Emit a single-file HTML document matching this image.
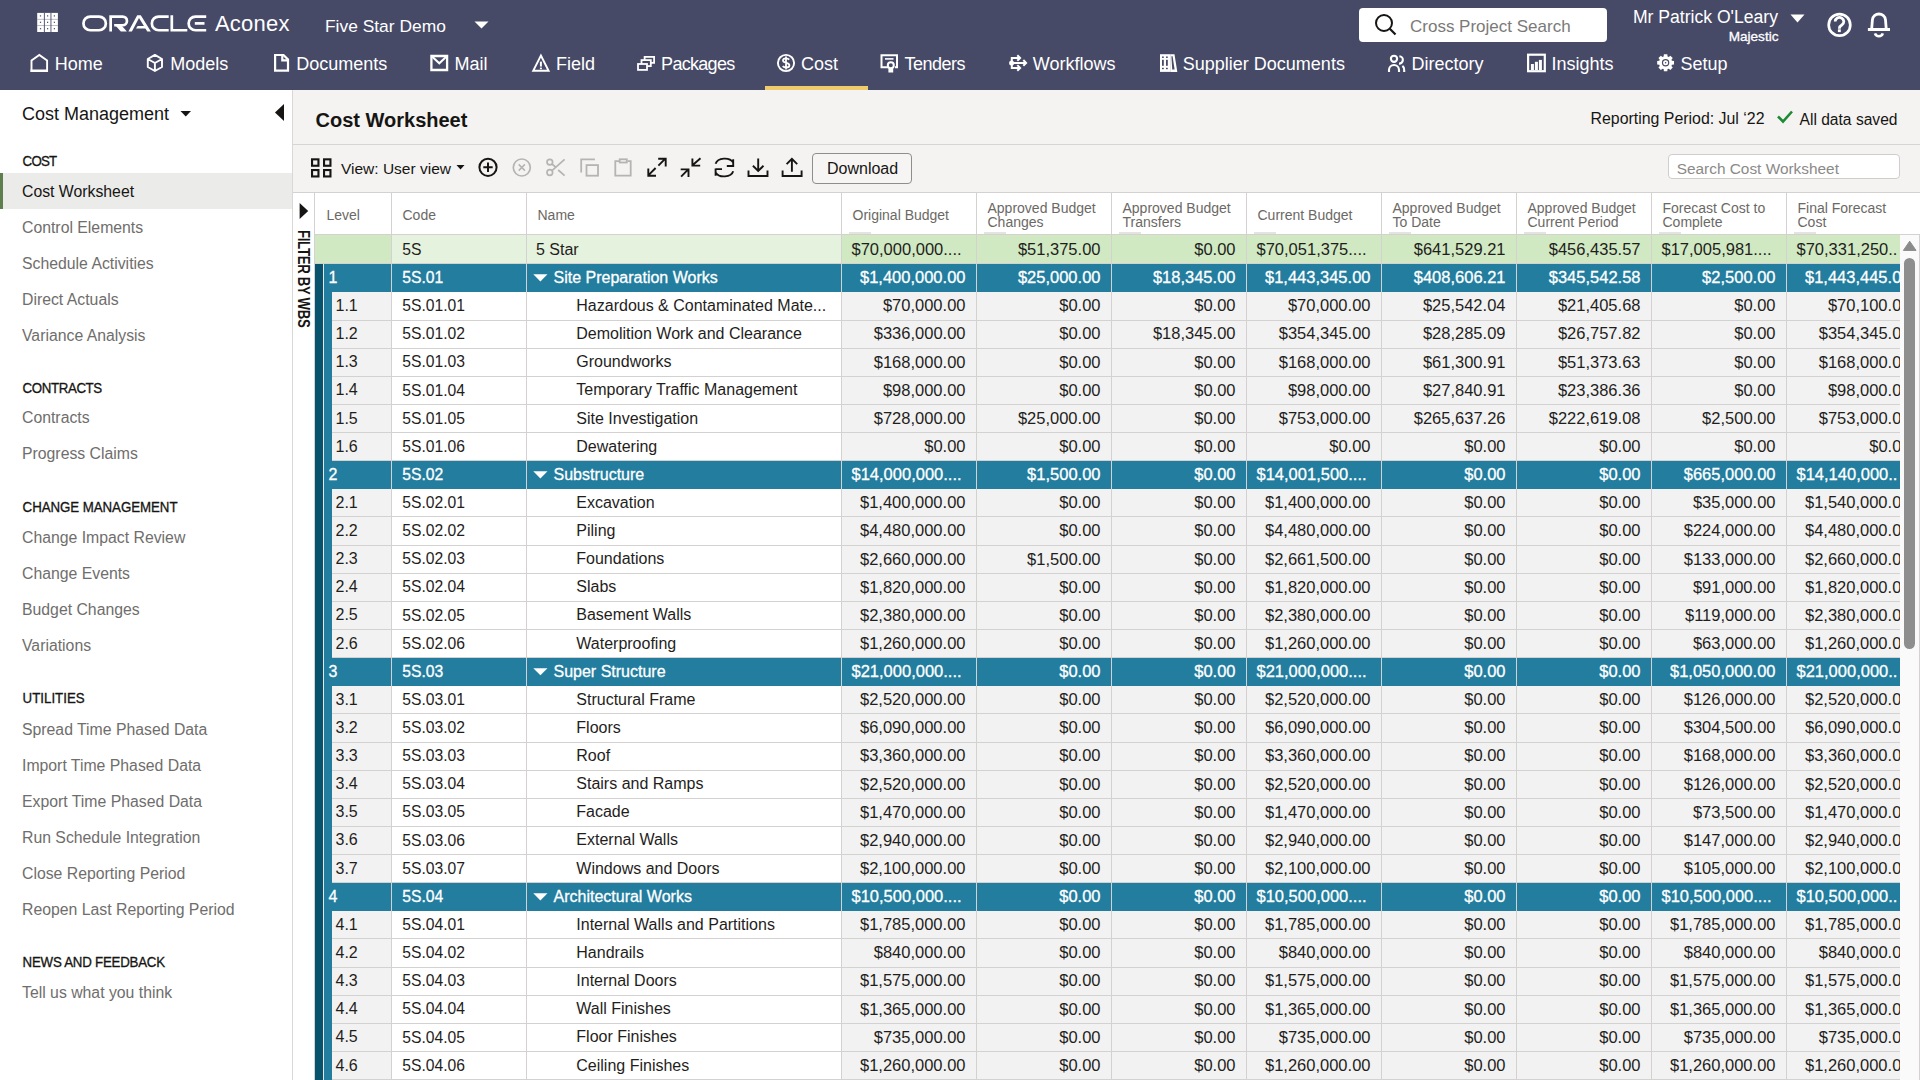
<!DOCTYPE html><html><head><meta charset="utf-8"><title>Cost Worksheet</title><style>
*{box-sizing:border-box;margin:0;padding:0}
html,body{width:1920px;height:1080px;overflow:hidden;background:#f4f3f1;font-family:"Liberation Sans", sans-serif}
.t{position:absolute;white-space:nowrap}
.abs{position:absolute}
svg{position:absolute;overflow:visible}
</style></head><body>
<div class="abs" style="left:0;top:0;width:1920px;height:90px;background:#474a67"></div>
<svg style="left:0;top:0" width="80" height="40"><rect x="37.2" y="12.9" width="20.7" height="19.1" fill="#fff"/><rect x="43.9" y="12.9" width="0.9" height="19.1" fill="#474a67"/><rect x="50.5" y="12.9" width="0.9" height="19.1" fill="#474a67"/><rect x="37.2" y="18.9" width="20.7" height="0.8" fill="#474a67" opacity="0.45"/><rect x="37.2" y="25.1" width="20.7" height="0.8" fill="#474a67" opacity="0.45"/><rect x="39.9" y="15.3" width="1.2" height="1.2" fill="#474a67"/><rect x="47.0" y="15.3" width="1.2" height="1.2" fill="#474a67"/><rect x="53.8" y="15.3" width="1.2" height="1.2" fill="#474a67"/><rect x="39.9" y="21.7" width="1.2" height="1.2" fill="#474a67"/><rect x="47.0" y="21.7" width="1.2" height="1.2" fill="#474a67"/><rect x="53.8" y="21.7" width="1.2" height="1.2" fill="#474a67"/><rect x="39.9" y="28.099999999999998" width="1.2" height="1.2" fill="#474a67"/><rect x="47.0" y="28.099999999999998" width="1.2" height="1.2" fill="#474a67"/><rect x="53.8" y="28.099999999999998" width="1.2" height="1.2" fill="#474a67"/></svg>
<svg style="left:0;top:0" width="300" height="40" fill="none" stroke="#fff" stroke-width="2.7">
<rect x="83.45" y="16.55" width="22.4" height="13.7" rx="6.85"/>
<path d="M110.65 31.6 V16.55 H122.6 a4.35 4.35 0 0 1 0 8.7 H114.2"/>
<path d="M114.3 24.2 L120.8 31.6 H126.9 L120.4 24.2 Z" fill="#fff" stroke="none"/>
<path d="M128.4 31.6 L137.2 15.2 H140.8 L150.9 31.6 H147.3 L139 17.9 L131.9 31.6 Z" fill="#fff" stroke="none"/>
<path d="M136 28.6 L137.6 25.9 H145.7 L147.3 28.6 Z" fill="#fff" stroke="none"/>
<path d="M168.7 16.55 H158.7 a6.85 6.85 0 0 0 0 13.7 H168.7"/>
<path d="M171.8 15.2 V30.25 H187.3"/>
<path d="M206.2 16.55 H195.5 a6.85 6.85 0 0 0 0 13.7 H206.2"/>
<path d="M194.8 23.4 H204.5"/>
</svg>
<div class="t" style="left:215px;top:10.08px;font-size:22px;line-height:28px;color:#fff;font-weight:400;letter-spacing:0.2px">Aconex</div>
<div class="t" style="left:325px;top:14.97px;font-size:17.4px;line-height:22px;color:#fff;font-weight:400;">Five Star Demo</div>
<svg style="left:0;top:0" width="500" height="40"><path d="M474.5 21.5 H488.5 L481.5 28.5Z" fill="#fff"/></svg>
<div class="abs" style="left:1359px;top:8px;width:248px;height:34px;background:#fff;border-radius:4px"></div>
<svg style="left:0;top:0" width="1920" height="50"><circle cx="1384" cy="23" r="8" fill="none" stroke="#161513" stroke-width="2"/><path d="M1389.8 28.8 L1395.5 34.5" stroke="#161513" stroke-width="2.2"/></svg>
<div class="t" style="left:1410px;top:15.91px;font-size:17px;line-height:21px;color:#7b7a78;font-weight:400;">Cross Project Search</div>
<div class="t" style="right:142px;top:5.90px;font-size:17.6px;line-height:22px;color:#fff;font-weight:400;">Mr Patrick O'Leary</div>
<div class="t" style="right:141.5px;top:28.29px;font-size:13.6px;line-height:17px;color:#fff;font-weight:400;-webkit-text-stroke:0.3px #fff">Majestic</div>
<svg style="left:0;top:0" width="1920" height="50"><path d="M1790.5 14.5 H1804.5 L1797.5 22.5Z" fill="#fff"/><circle cx="1839.5" cy="24.9" r="10.8" fill="none" stroke="#fff" stroke-width="2.7"/><path d="M1835.2 21.6 a4.3 4.1 0 1 1 6.6 3.4 c-1.3 0.8 -2.4 1.5 -2.4 3.2 v0.6" fill="none" stroke="#fff" stroke-width="2.8"/><rect x="1837.9" y="29.3" width="2.9" height="2.8" fill="#fff"/><path d="M1871.7 28.5 L1872.4 19.8 A6.6 6.6 0 0 1 1885.5 19.8 L1886.2 28.5" fill="none" stroke="#fff" stroke-width="2.8"/><rect x="1867.9" y="28" width="22.1" height="3" fill="#fff"/><path d="M1875 33.4 A4.1 4.1 0 0 0 1882.8 33.4" fill="none" stroke="#fff" stroke-width="2.6"/></svg>
<div class="t" style="left:54.8px;top:53.26px;font-size:18px;line-height:22px;color:#fff;font-weight:400;letter-spacing:0px">Home</div>
<div class="t" style="left:170.3px;top:53.26px;font-size:18px;line-height:22px;color:#fff;font-weight:400;letter-spacing:0px">Models</div>
<div class="t" style="left:296.3px;top:53.26px;font-size:18px;line-height:22px;color:#fff;font-weight:400;letter-spacing:0px">Documents</div>
<div class="t" style="left:454.5px;top:53.26px;font-size:18px;line-height:22px;color:#fff;font-weight:400;letter-spacing:0px">Mail</div>
<div class="t" style="left:556.0999999999999px;top:53.26px;font-size:18px;line-height:22px;color:#fff;font-weight:400;letter-spacing:0px">Field</div>
<div class="t" style="left:661.0999999999999px;top:53.26px;font-size:18px;line-height:22px;color:#fff;font-weight:400;letter-spacing:-0.7px">Packages</div>
<div class="t" style="left:801.0999999999999px;top:53.26px;font-size:18px;line-height:22px;color:#fff;font-weight:400;letter-spacing:0px">Cost</div>
<div class="t" style="left:904.5px;top:53.26px;font-size:18px;line-height:22px;color:#fff;font-weight:400;letter-spacing:-0.5px">Tenders</div>
<div class="t" style="left:1032.8px;top:53.26px;font-size:18px;line-height:22px;color:#fff;font-weight:400;letter-spacing:0px">Workflows</div>
<div class="t" style="left:1182.8px;top:53.26px;font-size:18px;line-height:22px;color:#fff;font-weight:400;letter-spacing:0px">Supplier Documents</div>
<div class="t" style="left:1411.5px;top:53.26px;font-size:18px;line-height:22px;color:#fff;font-weight:400;letter-spacing:0px">Directory</div>
<div class="t" style="left:1551.5px;top:53.26px;font-size:18px;line-height:22px;color:#fff;font-weight:400;letter-spacing:0px">Insights</div>
<div class="t" style="left:1680.5px;top:53.26px;font-size:18px;line-height:22px;color:#fff;font-weight:400;letter-spacing:0px">Setup</div>
<svg style="left:0;top:0" width="1920" height="90">
<path d="M31.5 71 V60.6 L39.3 54.9 L47.1 60.6 V71 Z" fill="none" stroke="#fff" stroke-width="1.9" stroke-linejoin="miter"/><rect x="30.5" y="69.5" width="17.5" height="2.4" fill="#fff"/>
<path d="M154.9 54.9 L162 59 V67 L154.9 71 L147.8 67 V59 Z M147.8 59 L154.9 63 L162 59 M154.9 63 V71" fill="none" stroke="#fff" stroke-width="1.9" stroke-linejoin="round"/>
<path d="M275.1 55 H283.5 L288 59.5 V70.7 H275.1 Z" fill="none" stroke="#fff" stroke-width="2.2" stroke-linejoin="miter"/><path d="M282.3 55 V60.3 H288" fill="none" stroke="#fff" stroke-width="2.2"/>
<path d="M431.4 56 H447.1 V70 H431.4 Z" fill="none" stroke="#fff" stroke-width="2.3"/><path d="M432 56.5 L439.3 63.3 L446.5 56.5" fill="none" stroke="#fff" stroke-width="2"/>
<path d="M540.9 55.5 L548.6 70.7 H533.2 Z" fill="none" stroke="#fff" stroke-width="1.9" stroke-linejoin="miter"/><path d="M540.9 61.6 V66.6" stroke="#fff" stroke-width="2"/><rect x="539.9" y="67.6" width="2" height="1.6" fill="#fff"/>
<g fill="#474a67" stroke="#fff" stroke-width="1.8"><rect x="644.65" y="56.9" width="9.45" height="5.95"/><rect x="641.5" y="60.1" width="9.3" height="6"/><rect x="638" y="64" width="9" height="5.9"/></g>
<circle cx="786" cy="63" r="8.1" fill="none" stroke="#fff" stroke-width="1.9"/><path d="M789.2 59.6 c-0.8 -1 -1.9 -1.3 -3.1 -1.3 c-1.9 0 -3.1 0.9 -3.1 2.2 c0 3 6.4 1.6 6.4 4.7 c0 1.4 -1.3 2.3 -3.3 2.3 c-1.3 0 -2.6 -0.5 -3.4 -1.4 M786 56.5 V69.5" fill="none" stroke="#fff" stroke-width="1.8"/>
<path d="M891.5 67.2 H881.5 V55.3 H897 V67.2 H895" fill="none" stroke="#fff" stroke-width="2"/><path d="M885 58.9 H893.5" stroke="#fff" stroke-width="1.6"/><circle cx="890.8" cy="65.2" r="3" fill="#474a67" stroke="#fff" stroke-width="2"/><path d="M889 68.2 V72 H892.6 V68.2" fill="#fff" stroke="#fff" stroke-width="1.2"/>
<circle cx="1011.6" cy="62.9" r="1.6" fill="none" stroke="#fff" stroke-width="1.8"/><path d="M1011.8 57 V69 M1010.9 58 H1019.6 M1010.9 67.9 H1019.6 M1013.3 62.9 H1025.6 M1017.3 55.2 L1020.1 58 L1017.3 60.8 M1023.3 60 L1026.1 62.9 L1023.3 65.8 M1017.3 65.1 L1020.1 67.9 L1017.3 70.7" fill="none" stroke="#fff" stroke-width="2"/>
<path d="M1160 54.2 H1170.5 V71.9 H1160 Z" fill="#fff"/><g fill="#474a67"><rect x="1162" y="56.5" width="1.8" height="1.4"/><rect x="1166" y="56.5" width="1.8" height="1.4"/><rect x="1162" y="59.8" width="1.8" height="6"/><rect x="1166" y="59.8" width="1.8" height="6"/><rect x="1162" y="67.8" width="1.8" height="1.4"/><rect x="1166" y="67.8" width="1.8" height="1.4"/></g>
<path d="M1170.3 54.2 H1174.5 L1177.3 71.9 H1170.3 Z" fill="#fff"/><path d="M1171.4 56.3 H1172.6 L1174.6 69.5 H1172.2 Z" fill="#474a67"/>
<circle cx="1394" cy="58.8" r="3.1" fill="none" stroke="#fff" stroke-width="2.1"/><path d="M1399.4 56.3 A3.3 3.3 0 0 1 1399 63.6" fill="none" stroke="#fff" stroke-width="2.1"/><path d="M1389 72 V70 A5 5 0 0 1 1399 70 V72" fill="none" stroke="#fff" stroke-width="2.1"/><path d="M1402.4 65.8 A4.5 4.5 0 0 1 1404.2 70 V72" fill="none" stroke="#fff" stroke-width="2.1"/>
<rect x="1528.1" y="54.7" width="16.7" height="16.5" fill="none" stroke="#fff" stroke-width="2.2"/><g fill="#fff"><rect x="1530.9" y="64" width="3" height="6"/><rect x="1534.9" y="61.8" width="3" height="8.2"/><rect x="1538.9" y="59.9" width="3" height="10.1"/></g>
<path d="M1667.31 71.23 L1663.89 71.23 L1663.65 69.11 L1662.52 68.64 L1660.85 69.97 L1658.43 67.55 L1659.76 65.88 L1659.29 64.75 L1657.17 64.51 L1657.17 61.09 L1659.29 60.85 L1659.76 59.72 L1658.43 58.05 L1660.85 55.63 L1662.52 56.96 L1663.65 56.49 L1663.89 54.37 L1667.31 54.37 L1667.55 56.49 L1668.68 56.96 L1670.35 55.63 L1672.77 58.05 L1671.44 59.72 L1671.91 60.85 L1674.03 61.09 L1674.03 64.51 L1671.91 64.75 L1671.44 65.88 L1672.77 67.55 L1670.35 69.97 L1668.68 68.64 L1667.55 69.11 Z" fill="#fff"/><circle cx="1665.6" cy="62.8" r="3.7" fill="#474a67"/><circle cx="1665.6" cy="62.8" r="2.5" fill="#fff"/><circle cx="1665.6" cy="62.8" r="0.8" fill="#474a67"/></svg>
<div class="abs" style="left:765px;top:86px;width:103px;height:4px;background:#f0cb6b"></div>
<div class="abs" style="left:0;top:90px;width:293px;height:990px;background:#fff;border-right:1px solid #d9d8d6"></div>
<div class="t" style="left:22px;top:102.76px;font-size:18px;line-height:22px;color:#161513;font-weight:400;">Cost Management</div>
<svg style="left:0;top:0" width="300" height="140"><path d="M180.5 111 H191 L185.75 116.5Z" fill="#161513"/><path d="M284 104 V121 L275 112.5Z" fill="#161513"/></svg>
<div class="abs" style="left:0;top:173px;width:292px;height:36px;background:#ebebea"></div>
<div class="abs" style="left:0;top:173px;width:3px;height:36px;background:#5e7f4d"></div>
<div class="t" style="left:22.6px;top:152.69px;font-size:13.3px;line-height:17px;color:#161513;font-weight:400;letter-spacing:-0.8px;-webkit-text-stroke:0.3px #161513;transform:scaleY(1.06);transform-origin:0 75%">COST</div>
<div class="t" style="left:22px;top:181.53px;font-size:15.8px;line-height:20px;color:#161513;font-weight:400;">Cost Worksheet</div>
<div class="t" style="left:22px;top:217.53px;font-size:15.8px;line-height:20px;color:#6f6e6c;font-weight:400;">Control Elements</div>
<div class="t" style="left:22px;top:253.53px;font-size:15.8px;line-height:20px;color:#6f6e6c;font-weight:400;">Schedule Activities</div>
<div class="t" style="left:22px;top:289.53px;font-size:15.8px;line-height:20px;color:#6f6e6c;font-weight:400;">Direct Actuals</div>
<div class="t" style="left:22px;top:325.53px;font-size:15.8px;line-height:20px;color:#6f6e6c;font-weight:400;">Variance Analysis</div>
<div class="t" style="left:22.6px;top:380.09px;font-size:13.3px;line-height:17px;color:#161513;font-weight:400;letter-spacing:-0.39px;-webkit-text-stroke:0.3px #161513;transform:scaleY(1.06);transform-origin:0 75%">CONTRACTS</div>
<div class="t" style="left:22px;top:408.03px;font-size:15.8px;line-height:20px;color:#6f6e6c;font-weight:400;">Contracts</div>
<div class="t" style="left:22px;top:444.33px;font-size:15.8px;line-height:20px;color:#6f6e6c;font-weight:400;">Progress Claims</div>
<div class="t" style="left:22.6px;top:499.09px;font-size:13.3px;line-height:17px;color:#161513;font-weight:400;letter-spacing:-0.06px;-webkit-text-stroke:0.3px #161513;transform:scaleY(1.06);transform-origin:0 75%">CHANGE MANAGEMENT</div>
<div class="t" style="left:22px;top:528.13px;font-size:15.8px;line-height:20px;color:#6f6e6c;font-weight:400;">Change Impact Review</div>
<div class="t" style="left:22px;top:564.43px;font-size:15.8px;line-height:20px;color:#6f6e6c;font-weight:400;">Change Events</div>
<div class="t" style="left:22px;top:600.43px;font-size:15.8px;line-height:20px;color:#6f6e6c;font-weight:400;">Budget Changes</div>
<div class="t" style="left:22px;top:636.13px;font-size:15.8px;line-height:20px;color:#6f6e6c;font-weight:400;">Variations</div>
<div class="t" style="left:22.6px;top:690.09px;font-size:13.3px;line-height:17px;color:#161513;font-weight:400;letter-spacing:0px;-webkit-text-stroke:0.3px #161513;transform:scaleY(1.06);transform-origin:0 75%">UTILITIES</div>
<div class="t" style="left:22px;top:719.53px;font-size:15.8px;line-height:20px;color:#6f6e6c;font-weight:400;">Spread Time Phased Data</div>
<div class="t" style="left:22px;top:755.53px;font-size:15.8px;line-height:20px;color:#6f6e6c;font-weight:400;">Import Time Phased Data</div>
<div class="t" style="left:22px;top:791.53px;font-size:15.8px;line-height:20px;color:#6f6e6c;font-weight:400;">Export Time Phased Data</div>
<div class="t" style="left:22px;top:827.53px;font-size:15.8px;line-height:20px;color:#6f6e6c;font-weight:400;">Run Schedule Integration</div>
<div class="t" style="left:22px;top:863.53px;font-size:15.8px;line-height:20px;color:#6f6e6c;font-weight:400;">Close Reporting Period</div>
<div class="t" style="left:22px;top:899.53px;font-size:15.8px;line-height:20px;color:#6f6e6c;font-weight:400;">Reopen Last Reporting Period</div>
<div class="t" style="left:22.6px;top:953.89px;font-size:13.3px;line-height:17px;color:#161513;font-weight:400;letter-spacing:-0.24px;-webkit-text-stroke:0.3px #161513;transform:scaleY(1.06);transform-origin:0 75%">NEWS AND FEEDBACK</div>
<div class="t" style="left:22px;top:982.53px;font-size:15.8px;line-height:20px;color:#6f6e6c;font-weight:400;">Tell us what you think</div>
<div class="t" style="left:315.5px;top:107.87px;font-size:20px;line-height:25px;color:#161513;font-weight:700;">Cost Worksheet</div>
<div class="t" style="right:155.5px;top:108.79px;font-size:15.9px;line-height:20px;color:#161513;font-weight:400;">Reporting Period: Jul ‘22</div>
<svg style="left:0;top:0" width="1920" height="140"><path d="M1778 116.5 L1783 121.5 L1792 111.5" fill="none" stroke="#1f8a34" stroke-width="2.6"/></svg>
<div class="t" style="right:22.5px;top:109.79px;font-size:15.6px;line-height:20px;color:#161513;font-weight:400;">All data saved</div>
<div class="abs" style="left:293px;top:143.5px;width:1627px;height:1px;background:#d6d5d3"></div>
<svg style="left:0;top:0" width="1920" height="200">
<g fill="none" stroke="#161513" stroke-width="2.1"><rect x="312.05" y="159.35" width="6.4" height="6.4"/><rect x="324.05" y="159.35" width="6.4" height="6.4"/><rect x="312.05" y="170.05" width="6.4" height="6.4"/><rect x="324.05" y="170.05" width="6.4" height="6.4"/></g>
<path d="M456.5 165 H464.5 L460.5 169.5Z" fill="#161513"/>
<circle cx="488" cy="167.3" r="8.6" fill="none" stroke="#161513" stroke-width="2"/><path d="M483.3 167.3 H492.7 M488 162.6 V172" stroke="#161513" stroke-width="2"/>
<circle cx="521.8" cy="167.5" r="8.5" fill="none" stroke="#b5b4b2" stroke-width="1.7"/><path d="M518.7 164.4 L524.9 170.6 M524.9 164.4 L518.7 170.6" stroke="#b5b4b2" stroke-width="1.5"/>
<g fill="none" stroke="#b5b4b2" stroke-width="1.7"><circle cx="549.8" cy="162.1" r="2.8"/><circle cx="549.8" cy="172.5" r="2.8"/><path d="M552 170.6 L564.6 159.3 M552.1 164 L555.6 167.2 M558.2 170 L564.6 175.6"/></g>
<g fill="none" stroke="#b5b4b2" stroke-width="1.8"><path d="M594.9 159.3 H581.2 V172.6"/><rect x="586.5" y="165.1" width="11.5" height="10.6"/></g>
<g fill="none" stroke="#b5b4b2" stroke-width="1.8"><path d="M619 161.1 H615.3 V175.7 H630.7 V161.1 H627.5"/><rect x="619.7" y="159.3" width="7.1" height="3.2"/></g>
<g fill="none" stroke="#161513" stroke-width="1.9"><path d="M648.3 175.3 L655.6 168 M658.4 165.6 L665.3 158.7 M648.3 168.4 V175.7 H656 M658.2 158.7 H665.7 V166.4"/></g>
<g fill="none" stroke="#161513" stroke-width="1.9"><path d="M681.1 176.6 L688.5 169.2 M680.7 169.4 H688.5 V177 M692.2 165.5 L700.5 158.2 M692.4 158.4 V165.6 H700.2"/></g>
<g fill="none" stroke="#161513" stroke-width="1.9"><path d="M715.6 163.8 A9.3 6.6 0 0 1 733.2 162.6 M726.8 166 H733.2 V159.3 M733.2 171.2 A9.3 6.6 0 0 1 715.6 172.4 M715.6 168.6 V175.7 M715.6 169.1 H722"/></g>
<g fill="none" stroke="#161513" stroke-width="1.9"><path d="M758.2 158.4 V170.6 M752.9 165.8 L758.2 171 L763.5 165.8 M748.5 170.4 V176 H767.5 V170.4"/></g>
<g fill="none" stroke="#161513" stroke-width="1.9"><path d="M791.9 171.7 V159 M786.6 164.2 L791.9 158.8 L797.2 164.2 M782.6 170.4 V176 H801.6 V170.4"/></g>
</svg>
<div class="t" style="left:341px;top:159.03px;font-size:15.5px;line-height:19px;color:#161513;font-weight:400;">View: User view</div>
<div class="abs" style="left:812px;top:153px;width:100px;height:31px;border:1px solid #8f8e8c;border-radius:4px;background:#f6f5f3"></div>
<div class="t" style="left:827px;top:158.66px;font-size:16px;line-height:20px;color:#161513;font-weight:400;">Download</div>
<div class="abs" style="left:1668px;top:154px;width:232px;height:25px;border:1px solid #cfcecc;border-radius:4px;background:#fff"></div>
<div class="t" style="left:1676.7px;top:158.66px;font-size:15.4px;line-height:19px;color:#8b8a88;font-weight:400;">Search Cost Worksheet</div>
<div class="abs" style="left:293px;top:192px;width:1627px;height:888px;overflow:hidden;background:#fff">
<div class="abs" style="left:0;top:0;width:1627px;height:1px;background:#d3d2d0"></div>
<div class="abs" style="left:21px;top:0;width:1px;height:888px;background:#d3d2d0"></div>
<svg style="left:0;top:0" width="30" height="40"><path d="M6.6 11 L15.2 19 L6.6 27Z" fill="#161513"/></svg>
<div class="t" style="left:3.5px;top:38.30000000000001px;writing-mode:vertical-rl;font-size:13.2px;line-height:13px;font-weight:700;color:#161513;letter-spacing:-0.3px;transform:scaleX(1.18);transform-origin:50% 0">FILTER BY WBS</div>
<div class="abs" style="left:98px;top:0;width:1px;height:43.0px;background:#d3d2d0"></div>
<div class="abs" style="left:233px;top:0;width:1px;height:43.0px;background:#d3d2d0"></div>
<div class="abs" style="left:548px;top:0;width:1px;height:43.0px;background:#d3d2d0"></div>
<div class="abs" style="left:683px;top:0;width:1px;height:43.0px;background:#d3d2d0"></div>
<div class="abs" style="left:818px;top:0;width:1px;height:43.0px;background:#d3d2d0"></div>
<div class="abs" style="left:953px;top:0;width:1px;height:43.0px;background:#d3d2d0"></div>
<div class="abs" style="left:1088px;top:0;width:1px;height:43.0px;background:#d3d2d0"></div>
<div class="abs" style="left:1223px;top:0;width:1px;height:43.0px;background:#d3d2d0"></div>
<div class="abs" style="left:1358px;top:0;width:1px;height:43.0px;background:#d3d2d0"></div>
<div class="abs" style="left:1493px;top:0;width:1px;height:43.0px;background:#d3d2d0"></div>
<div class="abs" style="left:22px;top:42px;width:1605px;height:1px;background:#d3d2d0"></div>
<div class="t" style="left:33.50px;top:14.15px;font-size:14px;line-height:18px;color:#6b6965">Level</div>
<div class="t" style="left:109.50px;top:14.15px;font-size:14px;line-height:18px;color:#6b6965">Code</div>
<div class="t" style="left:244.50px;top:14.15px;font-size:14px;line-height:18px;color:#6b6965">Name</div>
<div class="t" style="left:559.50px;top:14.15px;font-size:14px;line-height:18px;color:#6b6965">Original Budget</div>
<div class="abs" style="left:556px;top:40px;width:22px;height:2px;background:#e4e3e1"></div>
<div class="t" style="left:694.50px;top:7.05px;font-size:14px;line-height:18px;color:#6b6965">Approved Budget</div>
<div class="t" style="left:694.50px;top:21.35px;font-size:14px;line-height:18px;color:#6b6965">Changes</div>
<div class="abs" style="left:691px;top:40px;width:22px;height:2px;background:#e4e3e1"></div>
<div class="t" style="left:829.50px;top:7.05px;font-size:14px;line-height:18px;color:#6b6965">Approved Budget</div>
<div class="t" style="left:829.50px;top:21.35px;font-size:14px;line-height:18px;color:#6b6965">Transfers</div>
<div class="abs" style="left:826px;top:40px;width:22px;height:2px;background:#e4e3e1"></div>
<div class="t" style="left:964.50px;top:14.15px;font-size:14px;line-height:18px;color:#6b6965">Current Budget</div>
<div class="abs" style="left:961px;top:40px;width:22px;height:2px;background:#e4e3e1"></div>
<div class="t" style="left:1099.50px;top:7.05px;font-size:14px;line-height:18px;color:#6b6965">Approved Budget</div>
<div class="t" style="left:1099.50px;top:21.35px;font-size:14px;line-height:18px;color:#6b6965">To Date</div>
<div class="abs" style="left:1096px;top:40px;width:22px;height:2px;background:#e4e3e1"></div>
<div class="t" style="left:1234.50px;top:7.05px;font-size:14px;line-height:18px;color:#6b6965">Approved Budget</div>
<div class="t" style="left:1234.50px;top:21.35px;font-size:14px;line-height:18px;color:#6b6965">Current Period</div>
<div class="abs" style="left:1231px;top:40px;width:22px;height:2px;background:#e4e3e1"></div>
<div class="t" style="left:1369.50px;top:7.05px;font-size:14px;line-height:18px;color:#6b6965">Forecast Cost to</div>
<div class="t" style="left:1369.50px;top:21.35px;font-size:14px;line-height:18px;color:#6b6965">Complete</div>
<div class="abs" style="left:1366px;top:40px;width:22px;height:2px;background:#e4e3e1"></div>
<div class="t" style="left:1504.50px;top:7.05px;font-size:14px;line-height:18px;color:#6b6965">Final Forecast</div>
<div class="t" style="left:1504.50px;top:21.35px;font-size:14px;line-height:18px;color:#6b6965">Cost</div>
<div class="abs" style="left:1501px;top:40px;width:22px;height:2px;background:#e4e3e1"></div>
<div class="abs" style="left:22px;top:43.000px;width:76px;height:29.300px;background:#d0e9c3"></div>
<div class="abs" style="left:98px;top:43.000px;width:135px;height:29.300px;background:#e5f2dd"></div>
<div class="abs" style="left:233px;top:43.000px;width:315px;height:29.300px;background:#e5f2dd"></div>
<div class="abs" style="left:548px;top:43.000px;width:135px;height:29.300px;background:#d0e9c3"></div>
<div class="abs" style="left:683px;top:43.000px;width:135px;height:29.300px;background:#d0e9c3"></div>
<div class="abs" style="left:818px;top:43.000px;width:135px;height:29.300px;background:#d0e9c3"></div>
<div class="abs" style="left:953px;top:43.000px;width:135px;height:29.300px;background:#d0e9c3"></div>
<div class="abs" style="left:1088px;top:43.000px;width:135px;height:29.300px;background:#d0e9c3"></div>
<div class="abs" style="left:1223px;top:43.000px;width:135px;height:29.300px;background:#d0e9c3"></div>
<div class="abs" style="left:1358px;top:43.000px;width:135px;height:29.300px;background:#d0e9c3"></div>
<div class="abs" style="left:1493px;top:43.000px;width:135px;height:29.300px;background:#d0e9c3"></div>
<div class="t" style="left:109.20px;top:47.86px;font-size:15.7px;line-height:20px;color:#1f1e1c;">5S</div>
<div class="t" style="left:243.00px;top:47.76px;font-size:16px;line-height:20px;color:#1f1e1c;">5 Star</div>
<div class="t" style="left:558.50px;top:47.08px;font-size:16.5px;line-height:21px;color:#1f1e1c;">$70,000,000....</div>
<div class="t" style="right:819.50px;top:47.08px;font-size:16.5px;line-height:21px;color:#1f1e1c;">$51,375.00</div>
<div class="t" style="right:684.50px;top:47.08px;font-size:16.5px;line-height:21px;color:#1f1e1c;">$0.00</div>
<div class="t" style="left:963.50px;top:47.08px;font-size:16.5px;line-height:21px;color:#1f1e1c;">$70,051,375....</div>
<div class="t" style="right:414.50px;top:47.08px;font-size:16.5px;line-height:21px;color:#1f1e1c;">$641,529.21</div>
<div class="t" style="right:279.50px;top:47.08px;font-size:16.5px;line-height:21px;color:#1f1e1c;">$456,435.57</div>
<div class="t" style="left:1368.50px;top:47.08px;font-size:16.5px;line-height:21px;color:#1f1e1c;">$17,005,981....</div>
<div class="t" style="left:1503.50px;top:47.08px;font-size:16.5px;line-height:21px;color:#1f1e1c;">$70,331,250..</div>
<div class="abs" style="left:22px;top:71.300px;width:1605px;height:1px;background:#d3d2d0"></div>
<div class="abs" style="left:98px;top:43.000px;width:1px;height:29.300px;background:#d3d2d0"></div>
<div class="abs" style="left:233px;top:43.000px;width:1px;height:29.300px;background:#d3d2d0"></div>
<div class="abs" style="left:548px;top:43.000px;width:1px;height:29.300px;background:#d3d2d0"></div>
<div class="abs" style="left:683px;top:43.000px;width:1px;height:29.300px;background:#d3d2d0"></div>
<div class="abs" style="left:818px;top:43.000px;width:1px;height:29.300px;background:#d3d2d0"></div>
<div class="abs" style="left:953px;top:43.000px;width:1px;height:29.300px;background:#d3d2d0"></div>
<div class="abs" style="left:1088px;top:43.000px;width:1px;height:29.300px;background:#d3d2d0"></div>
<div class="abs" style="left:1223px;top:43.000px;width:1px;height:29.300px;background:#d3d2d0"></div>
<div class="abs" style="left:1358px;top:43.000px;width:1px;height:29.300px;background:#d3d2d0"></div>
<div class="abs" style="left:1493px;top:43.000px;width:1px;height:29.300px;background:#d3d2d0"></div>
<div class="abs" style="left:22px;top:72.300px;width:76px;height:28.130px;background:#227d9e"></div>
<div class="abs" style="left:98px;top:72.300px;width:135px;height:28.130px;background:#227d9e"></div>
<div class="abs" style="left:233px;top:72.300px;width:315px;height:28.130px;background:#227d9e"></div>
<div class="abs" style="left:548px;top:72.300px;width:135px;height:28.130px;background:#227d9e"></div>
<div class="abs" style="left:683px;top:72.300px;width:135px;height:28.130px;background:#227d9e"></div>
<div class="abs" style="left:818px;top:72.300px;width:135px;height:28.130px;background:#227d9e"></div>
<div class="abs" style="left:953px;top:72.300px;width:135px;height:28.130px;background:#227d9e"></div>
<div class="abs" style="left:1088px;top:72.300px;width:135px;height:28.130px;background:#227d9e"></div>
<div class="abs" style="left:1223px;top:72.300px;width:135px;height:28.130px;background:#227d9e"></div>
<div class="abs" style="left:1358px;top:72.300px;width:135px;height:28.130px;background:#227d9e"></div>
<div class="abs" style="left:1493px;top:72.300px;width:135px;height:28.130px;background:#227d9e"></div>
<div class="abs" style="left:22px;top:72.300px;width:8px;height:28.130px;background:#07526c"></div>
<div class="abs" style="left:30px;top:72.300px;width:1px;height:28.130px;background:#e8e8e8"></div>
<div class="t" style="left:35.50px;top:75.89px;font-size:16px;line-height:20px;color:#ffffff;-webkit-text-stroke:0.3px #ffffff;">1</div>
<div class="t" style="left:109.20px;top:75.99px;font-size:15.7px;line-height:20px;color:#ffffff;-webkit-text-stroke:0.3px #ffffff;">5S.01</div>
<svg style="left:0;top:0" width="600" height="900"><path d="M240.29999999999995 82.33 H254.5 L247.39999999999998 89.53Z" fill="#fff"/></svg>
<div class="t" style="left:260.50px;top:75.89px;font-size:16px;line-height:20px;color:#ffffff;-webkit-text-stroke:0.3px #ffffff;">Site Preparation Works</div>
<div class="t" style="right:954.50px;top:75.21px;font-size:16.5px;line-height:21px;color:#ffffff;-webkit-text-stroke:0.3px #ffffff;">$1,400,000.00</div>
<div class="t" style="right:819.50px;top:75.21px;font-size:16.5px;line-height:21px;color:#ffffff;-webkit-text-stroke:0.3px #ffffff;">$25,000.00</div>
<div class="t" style="right:684.50px;top:75.21px;font-size:16.5px;line-height:21px;color:#ffffff;-webkit-text-stroke:0.3px #ffffff;">$18,345.00</div>
<div class="t" style="right:549.50px;top:75.21px;font-size:16.5px;line-height:21px;color:#ffffff;-webkit-text-stroke:0.3px #ffffff;">$1,443,345.00</div>
<div class="t" style="right:414.50px;top:75.21px;font-size:16.5px;line-height:21px;color:#ffffff;-webkit-text-stroke:0.3px #ffffff;">$408,606.21</div>
<div class="t" style="right:279.50px;top:75.21px;font-size:16.5px;line-height:21px;color:#ffffff;-webkit-text-stroke:0.3px #ffffff;">$345,542.58</div>
<div class="t" style="right:144.50px;top:75.21px;font-size:16.5px;line-height:21px;color:#ffffff;-webkit-text-stroke:0.3px #ffffff;">$2,500.00</div>
<div class="t" style="right:9.50px;top:75.21px;font-size:16.5px;line-height:21px;color:#ffffff;-webkit-text-stroke:0.3px #ffffff;">$1,443,445.00</div>
<div class="abs" style="left:31px;top:99.430px;width:1596px;height:1px;background:#227d9e"></div>
<div class="abs" style="left:98px;top:72.300px;width:1px;height:28.130px;background:#d3d2d0"></div>
<div class="abs" style="left:233px;top:72.300px;width:1px;height:28.130px;background:#d3d2d0"></div>
<div class="abs" style="left:548px;top:72.300px;width:1px;height:28.130px;background:#d3d2d0"></div>
<div class="abs" style="left:683px;top:72.300px;width:1px;height:28.130px;background:#d3d2d0"></div>
<div class="abs" style="left:818px;top:72.300px;width:1px;height:28.130px;background:#d3d2d0"></div>
<div class="abs" style="left:953px;top:72.300px;width:1px;height:28.130px;background:#d3d2d0"></div>
<div class="abs" style="left:1088px;top:72.300px;width:1px;height:28.130px;background:#d3d2d0"></div>
<div class="abs" style="left:1223px;top:72.300px;width:1px;height:28.130px;background:#d3d2d0"></div>
<div class="abs" style="left:1358px;top:72.300px;width:1px;height:28.130px;background:#d3d2d0"></div>
<div class="abs" style="left:1493px;top:72.300px;width:1px;height:28.130px;background:#d3d2d0"></div>
<div class="abs" style="left:22px;top:100.430px;width:76px;height:28.130px;background:#f2f2f2"></div>
<div class="abs" style="left:98px;top:100.430px;width:135px;height:28.130px;background:#ffffff"></div>
<div class="abs" style="left:233px;top:100.430px;width:315px;height:28.130px;background:#ffffff"></div>
<div class="abs" style="left:548px;top:100.430px;width:135px;height:28.130px;background:#f2f2f2"></div>
<div class="abs" style="left:683px;top:100.430px;width:135px;height:28.130px;background:#f2f2f2"></div>
<div class="abs" style="left:818px;top:100.430px;width:135px;height:28.130px;background:#f2f2f2"></div>
<div class="abs" style="left:953px;top:100.430px;width:135px;height:28.130px;background:#f2f2f2"></div>
<div class="abs" style="left:1088px;top:100.430px;width:135px;height:28.130px;background:#f2f2f2"></div>
<div class="abs" style="left:1223px;top:100.430px;width:135px;height:28.130px;background:#f2f2f2"></div>
<div class="abs" style="left:1358px;top:100.430px;width:135px;height:28.130px;background:#f2f2f2"></div>
<div class="abs" style="left:1493px;top:100.430px;width:135px;height:28.130px;background:#f2f2f2"></div>
<div class="abs" style="left:22px;top:100.430px;width:8px;height:28.130px;background:#07526c"></div>
<div class="abs" style="left:30px;top:100.430px;width:1px;height:28.130px;background:#e8e8e8"></div>
<div class="abs" style="left:31px;top:100.430px;width:8px;height:28.130px;background:#227d9e"></div>
<div class="t" style="left:42.50px;top:104.02px;font-size:16px;line-height:20px;color:#1f1e1c;">1.1</div>
<div class="t" style="left:109.20px;top:104.12px;font-size:15.7px;line-height:20px;color:#1f1e1c;">5S.01.01</div>
<div class="t" style="left:283.30px;top:104.02px;font-size:16px;line-height:20px;color:#1f1e1c;">Hazardous &amp; Contaminated Mate...</div>
<div class="t" style="right:954.50px;top:103.34px;font-size:16.5px;line-height:21px;color:#1f1e1c;">$70,000.00</div>
<div class="t" style="right:819.50px;top:103.34px;font-size:16.5px;line-height:21px;color:#1f1e1c;">$0.00</div>
<div class="t" style="right:684.50px;top:103.34px;font-size:16.5px;line-height:21px;color:#1f1e1c;">$0.00</div>
<div class="t" style="right:549.50px;top:103.34px;font-size:16.5px;line-height:21px;color:#1f1e1c;">$70,000.00</div>
<div class="t" style="right:414.50px;top:103.34px;font-size:16.5px;line-height:21px;color:#1f1e1c;">$25,542.04</div>
<div class="t" style="right:279.50px;top:103.34px;font-size:16.5px;line-height:21px;color:#1f1e1c;">$21,405.68</div>
<div class="t" style="right:144.50px;top:103.34px;font-size:16.5px;line-height:21px;color:#1f1e1c;">$0.00</div>
<div class="t" style="right:9.50px;top:103.34px;font-size:16.5px;line-height:21px;color:#1f1e1c;">$70,100.00</div>
<div class="abs" style="left:39px;top:127.560px;width:1588px;height:1px;background:#d3d2d0"></div>
<div class="abs" style="left:98px;top:100.430px;width:1px;height:28.130px;background:#d3d2d0"></div>
<div class="abs" style="left:233px;top:100.430px;width:1px;height:28.130px;background:#d3d2d0"></div>
<div class="abs" style="left:548px;top:100.430px;width:1px;height:28.130px;background:#d3d2d0"></div>
<div class="abs" style="left:683px;top:100.430px;width:1px;height:28.130px;background:#d3d2d0"></div>
<div class="abs" style="left:818px;top:100.430px;width:1px;height:28.130px;background:#d3d2d0"></div>
<div class="abs" style="left:953px;top:100.430px;width:1px;height:28.130px;background:#d3d2d0"></div>
<div class="abs" style="left:1088px;top:100.430px;width:1px;height:28.130px;background:#d3d2d0"></div>
<div class="abs" style="left:1223px;top:100.430px;width:1px;height:28.130px;background:#d3d2d0"></div>
<div class="abs" style="left:1358px;top:100.430px;width:1px;height:28.130px;background:#d3d2d0"></div>
<div class="abs" style="left:1493px;top:100.430px;width:1px;height:28.130px;background:#d3d2d0"></div>
<div class="abs" style="left:22px;top:128.560px;width:76px;height:28.130px;background:#f2f2f2"></div>
<div class="abs" style="left:98px;top:128.560px;width:135px;height:28.130px;background:#ffffff"></div>
<div class="abs" style="left:233px;top:128.560px;width:315px;height:28.130px;background:#ffffff"></div>
<div class="abs" style="left:548px;top:128.560px;width:135px;height:28.130px;background:#f2f2f2"></div>
<div class="abs" style="left:683px;top:128.560px;width:135px;height:28.130px;background:#f2f2f2"></div>
<div class="abs" style="left:818px;top:128.560px;width:135px;height:28.130px;background:#f2f2f2"></div>
<div class="abs" style="left:953px;top:128.560px;width:135px;height:28.130px;background:#f2f2f2"></div>
<div class="abs" style="left:1088px;top:128.560px;width:135px;height:28.130px;background:#f2f2f2"></div>
<div class="abs" style="left:1223px;top:128.560px;width:135px;height:28.130px;background:#f2f2f2"></div>
<div class="abs" style="left:1358px;top:128.560px;width:135px;height:28.130px;background:#f2f2f2"></div>
<div class="abs" style="left:1493px;top:128.560px;width:135px;height:28.130px;background:#f2f2f2"></div>
<div class="abs" style="left:22px;top:128.560px;width:8px;height:28.130px;background:#07526c"></div>
<div class="abs" style="left:30px;top:128.560px;width:1px;height:28.130px;background:#e8e8e8"></div>
<div class="abs" style="left:31px;top:128.560px;width:8px;height:28.130px;background:#227d9e"></div>
<div class="t" style="left:42.50px;top:132.15px;font-size:16px;line-height:20px;color:#1f1e1c;">1.2</div>
<div class="t" style="left:109.20px;top:132.25px;font-size:15.7px;line-height:20px;color:#1f1e1c;">5S.01.02</div>
<div class="t" style="left:283.30px;top:132.15px;font-size:16px;line-height:20px;color:#1f1e1c;">Demolition Work and Clearance</div>
<div class="t" style="right:954.50px;top:131.47px;font-size:16.5px;line-height:21px;color:#1f1e1c;">$336,000.00</div>
<div class="t" style="right:819.50px;top:131.47px;font-size:16.5px;line-height:21px;color:#1f1e1c;">$0.00</div>
<div class="t" style="right:684.50px;top:131.47px;font-size:16.5px;line-height:21px;color:#1f1e1c;">$18,345.00</div>
<div class="t" style="right:549.50px;top:131.47px;font-size:16.5px;line-height:21px;color:#1f1e1c;">$354,345.00</div>
<div class="t" style="right:414.50px;top:131.47px;font-size:16.5px;line-height:21px;color:#1f1e1c;">$28,285.09</div>
<div class="t" style="right:279.50px;top:131.47px;font-size:16.5px;line-height:21px;color:#1f1e1c;">$26,757.82</div>
<div class="t" style="right:144.50px;top:131.47px;font-size:16.5px;line-height:21px;color:#1f1e1c;">$0.00</div>
<div class="t" style="right:9.50px;top:131.47px;font-size:16.5px;line-height:21px;color:#1f1e1c;">$354,345.00</div>
<div class="abs" style="left:39px;top:155.690px;width:1588px;height:1px;background:#d3d2d0"></div>
<div class="abs" style="left:98px;top:128.560px;width:1px;height:28.130px;background:#d3d2d0"></div>
<div class="abs" style="left:233px;top:128.560px;width:1px;height:28.130px;background:#d3d2d0"></div>
<div class="abs" style="left:548px;top:128.560px;width:1px;height:28.130px;background:#d3d2d0"></div>
<div class="abs" style="left:683px;top:128.560px;width:1px;height:28.130px;background:#d3d2d0"></div>
<div class="abs" style="left:818px;top:128.560px;width:1px;height:28.130px;background:#d3d2d0"></div>
<div class="abs" style="left:953px;top:128.560px;width:1px;height:28.130px;background:#d3d2d0"></div>
<div class="abs" style="left:1088px;top:128.560px;width:1px;height:28.130px;background:#d3d2d0"></div>
<div class="abs" style="left:1223px;top:128.560px;width:1px;height:28.130px;background:#d3d2d0"></div>
<div class="abs" style="left:1358px;top:128.560px;width:1px;height:28.130px;background:#d3d2d0"></div>
<div class="abs" style="left:1493px;top:128.560px;width:1px;height:28.130px;background:#d3d2d0"></div>
<div class="abs" style="left:22px;top:156.690px;width:76px;height:28.130px;background:#f2f2f2"></div>
<div class="abs" style="left:98px;top:156.690px;width:135px;height:28.130px;background:#ffffff"></div>
<div class="abs" style="left:233px;top:156.690px;width:315px;height:28.130px;background:#ffffff"></div>
<div class="abs" style="left:548px;top:156.690px;width:135px;height:28.130px;background:#f2f2f2"></div>
<div class="abs" style="left:683px;top:156.690px;width:135px;height:28.130px;background:#f2f2f2"></div>
<div class="abs" style="left:818px;top:156.690px;width:135px;height:28.130px;background:#f2f2f2"></div>
<div class="abs" style="left:953px;top:156.690px;width:135px;height:28.130px;background:#f2f2f2"></div>
<div class="abs" style="left:1088px;top:156.690px;width:135px;height:28.130px;background:#f2f2f2"></div>
<div class="abs" style="left:1223px;top:156.690px;width:135px;height:28.130px;background:#f2f2f2"></div>
<div class="abs" style="left:1358px;top:156.690px;width:135px;height:28.130px;background:#f2f2f2"></div>
<div class="abs" style="left:1493px;top:156.690px;width:135px;height:28.130px;background:#f2f2f2"></div>
<div class="abs" style="left:22px;top:156.690px;width:8px;height:28.130px;background:#07526c"></div>
<div class="abs" style="left:30px;top:156.690px;width:1px;height:28.130px;background:#e8e8e8"></div>
<div class="abs" style="left:31px;top:156.690px;width:8px;height:28.130px;background:#227d9e"></div>
<div class="t" style="left:42.50px;top:160.28px;font-size:16px;line-height:20px;color:#1f1e1c;">1.3</div>
<div class="t" style="left:109.20px;top:160.38px;font-size:15.7px;line-height:20px;color:#1f1e1c;">5S.01.03</div>
<div class="t" style="left:283.30px;top:160.28px;font-size:16px;line-height:20px;color:#1f1e1c;">Groundworks</div>
<div class="t" style="right:954.50px;top:159.60px;font-size:16.5px;line-height:21px;color:#1f1e1c;">$168,000.00</div>
<div class="t" style="right:819.50px;top:159.60px;font-size:16.5px;line-height:21px;color:#1f1e1c;">$0.00</div>
<div class="t" style="right:684.50px;top:159.60px;font-size:16.5px;line-height:21px;color:#1f1e1c;">$0.00</div>
<div class="t" style="right:549.50px;top:159.60px;font-size:16.5px;line-height:21px;color:#1f1e1c;">$168,000.00</div>
<div class="t" style="right:414.50px;top:159.60px;font-size:16.5px;line-height:21px;color:#1f1e1c;">$61,300.91</div>
<div class="t" style="right:279.50px;top:159.60px;font-size:16.5px;line-height:21px;color:#1f1e1c;">$51,373.63</div>
<div class="t" style="right:144.50px;top:159.60px;font-size:16.5px;line-height:21px;color:#1f1e1c;">$0.00</div>
<div class="t" style="right:9.50px;top:159.60px;font-size:16.5px;line-height:21px;color:#1f1e1c;">$168,000.00</div>
<div class="abs" style="left:39px;top:183.820px;width:1588px;height:1px;background:#d3d2d0"></div>
<div class="abs" style="left:98px;top:156.690px;width:1px;height:28.130px;background:#d3d2d0"></div>
<div class="abs" style="left:233px;top:156.690px;width:1px;height:28.130px;background:#d3d2d0"></div>
<div class="abs" style="left:548px;top:156.690px;width:1px;height:28.130px;background:#d3d2d0"></div>
<div class="abs" style="left:683px;top:156.690px;width:1px;height:28.130px;background:#d3d2d0"></div>
<div class="abs" style="left:818px;top:156.690px;width:1px;height:28.130px;background:#d3d2d0"></div>
<div class="abs" style="left:953px;top:156.690px;width:1px;height:28.130px;background:#d3d2d0"></div>
<div class="abs" style="left:1088px;top:156.690px;width:1px;height:28.130px;background:#d3d2d0"></div>
<div class="abs" style="left:1223px;top:156.690px;width:1px;height:28.130px;background:#d3d2d0"></div>
<div class="abs" style="left:1358px;top:156.690px;width:1px;height:28.130px;background:#d3d2d0"></div>
<div class="abs" style="left:1493px;top:156.690px;width:1px;height:28.130px;background:#d3d2d0"></div>
<div class="abs" style="left:22px;top:184.820px;width:76px;height:28.130px;background:#f2f2f2"></div>
<div class="abs" style="left:98px;top:184.820px;width:135px;height:28.130px;background:#ffffff"></div>
<div class="abs" style="left:233px;top:184.820px;width:315px;height:28.130px;background:#ffffff"></div>
<div class="abs" style="left:548px;top:184.820px;width:135px;height:28.130px;background:#f2f2f2"></div>
<div class="abs" style="left:683px;top:184.820px;width:135px;height:28.130px;background:#f2f2f2"></div>
<div class="abs" style="left:818px;top:184.820px;width:135px;height:28.130px;background:#f2f2f2"></div>
<div class="abs" style="left:953px;top:184.820px;width:135px;height:28.130px;background:#f2f2f2"></div>
<div class="abs" style="left:1088px;top:184.820px;width:135px;height:28.130px;background:#f2f2f2"></div>
<div class="abs" style="left:1223px;top:184.820px;width:135px;height:28.130px;background:#f2f2f2"></div>
<div class="abs" style="left:1358px;top:184.820px;width:135px;height:28.130px;background:#f2f2f2"></div>
<div class="abs" style="left:1493px;top:184.820px;width:135px;height:28.130px;background:#f2f2f2"></div>
<div class="abs" style="left:22px;top:184.820px;width:8px;height:28.130px;background:#07526c"></div>
<div class="abs" style="left:30px;top:184.820px;width:1px;height:28.130px;background:#e8e8e8"></div>
<div class="abs" style="left:31px;top:184.820px;width:8px;height:28.130px;background:#227d9e"></div>
<div class="t" style="left:42.50px;top:188.41px;font-size:16px;line-height:20px;color:#1f1e1c;">1.4</div>
<div class="t" style="left:109.20px;top:188.51px;font-size:15.7px;line-height:20px;color:#1f1e1c;">5S.01.04</div>
<div class="t" style="left:283.30px;top:188.41px;font-size:16px;line-height:20px;color:#1f1e1c;">Temporary Traffic Management</div>
<div class="t" style="right:954.50px;top:187.73px;font-size:16.5px;line-height:21px;color:#1f1e1c;">$98,000.00</div>
<div class="t" style="right:819.50px;top:187.73px;font-size:16.5px;line-height:21px;color:#1f1e1c;">$0.00</div>
<div class="t" style="right:684.50px;top:187.73px;font-size:16.5px;line-height:21px;color:#1f1e1c;">$0.00</div>
<div class="t" style="right:549.50px;top:187.73px;font-size:16.5px;line-height:21px;color:#1f1e1c;">$98,000.00</div>
<div class="t" style="right:414.50px;top:187.73px;font-size:16.5px;line-height:21px;color:#1f1e1c;">$27,840.91</div>
<div class="t" style="right:279.50px;top:187.73px;font-size:16.5px;line-height:21px;color:#1f1e1c;">$23,386.36</div>
<div class="t" style="right:144.50px;top:187.73px;font-size:16.5px;line-height:21px;color:#1f1e1c;">$0.00</div>
<div class="t" style="right:9.50px;top:187.73px;font-size:16.5px;line-height:21px;color:#1f1e1c;">$98,000.00</div>
<div class="abs" style="left:39px;top:211.950px;width:1588px;height:1px;background:#d3d2d0"></div>
<div class="abs" style="left:98px;top:184.820px;width:1px;height:28.130px;background:#d3d2d0"></div>
<div class="abs" style="left:233px;top:184.820px;width:1px;height:28.130px;background:#d3d2d0"></div>
<div class="abs" style="left:548px;top:184.820px;width:1px;height:28.130px;background:#d3d2d0"></div>
<div class="abs" style="left:683px;top:184.820px;width:1px;height:28.130px;background:#d3d2d0"></div>
<div class="abs" style="left:818px;top:184.820px;width:1px;height:28.130px;background:#d3d2d0"></div>
<div class="abs" style="left:953px;top:184.820px;width:1px;height:28.130px;background:#d3d2d0"></div>
<div class="abs" style="left:1088px;top:184.820px;width:1px;height:28.130px;background:#d3d2d0"></div>
<div class="abs" style="left:1223px;top:184.820px;width:1px;height:28.130px;background:#d3d2d0"></div>
<div class="abs" style="left:1358px;top:184.820px;width:1px;height:28.130px;background:#d3d2d0"></div>
<div class="abs" style="left:1493px;top:184.820px;width:1px;height:28.130px;background:#d3d2d0"></div>
<div class="abs" style="left:22px;top:212.950px;width:76px;height:28.130px;background:#f2f2f2"></div>
<div class="abs" style="left:98px;top:212.950px;width:135px;height:28.130px;background:#ffffff"></div>
<div class="abs" style="left:233px;top:212.950px;width:315px;height:28.130px;background:#ffffff"></div>
<div class="abs" style="left:548px;top:212.950px;width:135px;height:28.130px;background:#f2f2f2"></div>
<div class="abs" style="left:683px;top:212.950px;width:135px;height:28.130px;background:#f2f2f2"></div>
<div class="abs" style="left:818px;top:212.950px;width:135px;height:28.130px;background:#f2f2f2"></div>
<div class="abs" style="left:953px;top:212.950px;width:135px;height:28.130px;background:#f2f2f2"></div>
<div class="abs" style="left:1088px;top:212.950px;width:135px;height:28.130px;background:#f2f2f2"></div>
<div class="abs" style="left:1223px;top:212.950px;width:135px;height:28.130px;background:#f2f2f2"></div>
<div class="abs" style="left:1358px;top:212.950px;width:135px;height:28.130px;background:#f2f2f2"></div>
<div class="abs" style="left:1493px;top:212.950px;width:135px;height:28.130px;background:#f2f2f2"></div>
<div class="abs" style="left:22px;top:212.950px;width:8px;height:28.130px;background:#07526c"></div>
<div class="abs" style="left:30px;top:212.950px;width:1px;height:28.130px;background:#e8e8e8"></div>
<div class="abs" style="left:31px;top:212.950px;width:8px;height:28.130px;background:#227d9e"></div>
<div class="t" style="left:42.50px;top:216.54px;font-size:16px;line-height:20px;color:#1f1e1c;">1.5</div>
<div class="t" style="left:109.20px;top:216.64px;font-size:15.7px;line-height:20px;color:#1f1e1c;">5S.01.05</div>
<div class="t" style="left:283.30px;top:216.54px;font-size:16px;line-height:20px;color:#1f1e1c;">Site Investigation</div>
<div class="t" style="right:954.50px;top:215.86px;font-size:16.5px;line-height:21px;color:#1f1e1c;">$728,000.00</div>
<div class="t" style="right:819.50px;top:215.86px;font-size:16.5px;line-height:21px;color:#1f1e1c;">$25,000.00</div>
<div class="t" style="right:684.50px;top:215.86px;font-size:16.5px;line-height:21px;color:#1f1e1c;">$0.00</div>
<div class="t" style="right:549.50px;top:215.86px;font-size:16.5px;line-height:21px;color:#1f1e1c;">$753,000.00</div>
<div class="t" style="right:414.50px;top:215.86px;font-size:16.5px;line-height:21px;color:#1f1e1c;">$265,637.26</div>
<div class="t" style="right:279.50px;top:215.86px;font-size:16.5px;line-height:21px;color:#1f1e1c;">$222,619.08</div>
<div class="t" style="right:144.50px;top:215.86px;font-size:16.5px;line-height:21px;color:#1f1e1c;">$2,500.00</div>
<div class="t" style="right:9.50px;top:215.86px;font-size:16.5px;line-height:21px;color:#1f1e1c;">$753,000.00</div>
<div class="abs" style="left:39px;top:240.080px;width:1588px;height:1px;background:#d3d2d0"></div>
<div class="abs" style="left:98px;top:212.950px;width:1px;height:28.130px;background:#d3d2d0"></div>
<div class="abs" style="left:233px;top:212.950px;width:1px;height:28.130px;background:#d3d2d0"></div>
<div class="abs" style="left:548px;top:212.950px;width:1px;height:28.130px;background:#d3d2d0"></div>
<div class="abs" style="left:683px;top:212.950px;width:1px;height:28.130px;background:#d3d2d0"></div>
<div class="abs" style="left:818px;top:212.950px;width:1px;height:28.130px;background:#d3d2d0"></div>
<div class="abs" style="left:953px;top:212.950px;width:1px;height:28.130px;background:#d3d2d0"></div>
<div class="abs" style="left:1088px;top:212.950px;width:1px;height:28.130px;background:#d3d2d0"></div>
<div class="abs" style="left:1223px;top:212.950px;width:1px;height:28.130px;background:#d3d2d0"></div>
<div class="abs" style="left:1358px;top:212.950px;width:1px;height:28.130px;background:#d3d2d0"></div>
<div class="abs" style="left:1493px;top:212.950px;width:1px;height:28.130px;background:#d3d2d0"></div>
<div class="abs" style="left:22px;top:241.080px;width:76px;height:28.130px;background:#f2f2f2"></div>
<div class="abs" style="left:98px;top:241.080px;width:135px;height:28.130px;background:#ffffff"></div>
<div class="abs" style="left:233px;top:241.080px;width:315px;height:28.130px;background:#ffffff"></div>
<div class="abs" style="left:548px;top:241.080px;width:135px;height:28.130px;background:#f2f2f2"></div>
<div class="abs" style="left:683px;top:241.080px;width:135px;height:28.130px;background:#f2f2f2"></div>
<div class="abs" style="left:818px;top:241.080px;width:135px;height:28.130px;background:#f2f2f2"></div>
<div class="abs" style="left:953px;top:241.080px;width:135px;height:28.130px;background:#f2f2f2"></div>
<div class="abs" style="left:1088px;top:241.080px;width:135px;height:28.130px;background:#f2f2f2"></div>
<div class="abs" style="left:1223px;top:241.080px;width:135px;height:28.130px;background:#f2f2f2"></div>
<div class="abs" style="left:1358px;top:241.080px;width:135px;height:28.130px;background:#f2f2f2"></div>
<div class="abs" style="left:1493px;top:241.080px;width:135px;height:28.130px;background:#f2f2f2"></div>
<div class="abs" style="left:22px;top:241.080px;width:8px;height:28.130px;background:#07526c"></div>
<div class="abs" style="left:30px;top:241.080px;width:1px;height:28.130px;background:#e8e8e8"></div>
<div class="abs" style="left:31px;top:241.080px;width:8px;height:28.130px;background:#227d9e"></div>
<div class="t" style="left:42.50px;top:244.67px;font-size:16px;line-height:20px;color:#1f1e1c;">1.6</div>
<div class="t" style="left:109.20px;top:244.77px;font-size:15.7px;line-height:20px;color:#1f1e1c;">5S.01.06</div>
<div class="t" style="left:283.30px;top:244.67px;font-size:16px;line-height:20px;color:#1f1e1c;">Dewatering</div>
<div class="t" style="right:954.50px;top:243.99px;font-size:16.5px;line-height:21px;color:#1f1e1c;">$0.00</div>
<div class="t" style="right:819.50px;top:243.99px;font-size:16.5px;line-height:21px;color:#1f1e1c;">$0.00</div>
<div class="t" style="right:684.50px;top:243.99px;font-size:16.5px;line-height:21px;color:#1f1e1c;">$0.00</div>
<div class="t" style="right:549.50px;top:243.99px;font-size:16.5px;line-height:21px;color:#1f1e1c;">$0.00</div>
<div class="t" style="right:414.50px;top:243.99px;font-size:16.5px;line-height:21px;color:#1f1e1c;">$0.00</div>
<div class="t" style="right:279.50px;top:243.99px;font-size:16.5px;line-height:21px;color:#1f1e1c;">$0.00</div>
<div class="t" style="right:144.50px;top:243.99px;font-size:16.5px;line-height:21px;color:#1f1e1c;">$0.00</div>
<div class="t" style="right:9.50px;top:243.99px;font-size:16.5px;line-height:21px;color:#1f1e1c;">$0.00</div>
<div class="abs" style="left:39px;top:268.210px;width:1588px;height:1px;background:#d3d2d0"></div>
<div class="abs" style="left:98px;top:241.080px;width:1px;height:28.130px;background:#d3d2d0"></div>
<div class="abs" style="left:233px;top:241.080px;width:1px;height:28.130px;background:#d3d2d0"></div>
<div class="abs" style="left:548px;top:241.080px;width:1px;height:28.130px;background:#d3d2d0"></div>
<div class="abs" style="left:683px;top:241.080px;width:1px;height:28.130px;background:#d3d2d0"></div>
<div class="abs" style="left:818px;top:241.080px;width:1px;height:28.130px;background:#d3d2d0"></div>
<div class="abs" style="left:953px;top:241.080px;width:1px;height:28.130px;background:#d3d2d0"></div>
<div class="abs" style="left:1088px;top:241.080px;width:1px;height:28.130px;background:#d3d2d0"></div>
<div class="abs" style="left:1223px;top:241.080px;width:1px;height:28.130px;background:#d3d2d0"></div>
<div class="abs" style="left:1358px;top:241.080px;width:1px;height:28.130px;background:#d3d2d0"></div>
<div class="abs" style="left:1493px;top:241.080px;width:1px;height:28.130px;background:#d3d2d0"></div>
<div class="abs" style="left:22px;top:269.210px;width:76px;height:28.130px;background:#227d9e"></div>
<div class="abs" style="left:98px;top:269.210px;width:135px;height:28.130px;background:#227d9e"></div>
<div class="abs" style="left:233px;top:269.210px;width:315px;height:28.130px;background:#227d9e"></div>
<div class="abs" style="left:548px;top:269.210px;width:135px;height:28.130px;background:#227d9e"></div>
<div class="abs" style="left:683px;top:269.210px;width:135px;height:28.130px;background:#227d9e"></div>
<div class="abs" style="left:818px;top:269.210px;width:135px;height:28.130px;background:#227d9e"></div>
<div class="abs" style="left:953px;top:269.210px;width:135px;height:28.130px;background:#227d9e"></div>
<div class="abs" style="left:1088px;top:269.210px;width:135px;height:28.130px;background:#227d9e"></div>
<div class="abs" style="left:1223px;top:269.210px;width:135px;height:28.130px;background:#227d9e"></div>
<div class="abs" style="left:1358px;top:269.210px;width:135px;height:28.130px;background:#227d9e"></div>
<div class="abs" style="left:1493px;top:269.210px;width:135px;height:28.130px;background:#227d9e"></div>
<div class="abs" style="left:22px;top:269.210px;width:8px;height:28.130px;background:#07526c"></div>
<div class="abs" style="left:30px;top:269.210px;width:1px;height:28.130px;background:#e8e8e8"></div>
<div class="t" style="left:35.50px;top:272.80px;font-size:16px;line-height:20px;color:#ffffff;-webkit-text-stroke:0.3px #ffffff;">2</div>
<div class="t" style="left:109.20px;top:272.90px;font-size:15.7px;line-height:20px;color:#ffffff;-webkit-text-stroke:0.3px #ffffff;">5S.02</div>
<svg style="left:0;top:0" width="600" height="900"><path d="M240.29999999999995 279.24 H254.5 L247.39999999999998 286.44Z" fill="#fff"/></svg>
<div class="t" style="left:260.50px;top:272.80px;font-size:16px;line-height:20px;color:#ffffff;-webkit-text-stroke:0.3px #ffffff;">Substructure</div>
<div class="t" style="left:558.50px;top:272.12px;font-size:16.5px;line-height:21px;color:#ffffff;-webkit-text-stroke:0.3px #ffffff;">$14,000,000....</div>
<div class="t" style="right:819.50px;top:272.12px;font-size:16.5px;line-height:21px;color:#ffffff;-webkit-text-stroke:0.3px #ffffff;">$1,500.00</div>
<div class="t" style="right:684.50px;top:272.12px;font-size:16.5px;line-height:21px;color:#ffffff;-webkit-text-stroke:0.3px #ffffff;">$0.00</div>
<div class="t" style="left:963.50px;top:272.12px;font-size:16.5px;line-height:21px;color:#ffffff;-webkit-text-stroke:0.3px #ffffff;">$14,001,500....</div>
<div class="t" style="right:414.50px;top:272.12px;font-size:16.5px;line-height:21px;color:#ffffff;-webkit-text-stroke:0.3px #ffffff;">$0.00</div>
<div class="t" style="right:279.50px;top:272.12px;font-size:16.5px;line-height:21px;color:#ffffff;-webkit-text-stroke:0.3px #ffffff;">$0.00</div>
<div class="t" style="right:144.50px;top:272.12px;font-size:16.5px;line-height:21px;color:#ffffff;-webkit-text-stroke:0.3px #ffffff;">$665,000.00</div>
<div class="t" style="left:1503.50px;top:272.12px;font-size:16.5px;line-height:21px;color:#ffffff;-webkit-text-stroke:0.3px #ffffff;">$14,140,000..</div>
<div class="abs" style="left:31px;top:296.340px;width:1596px;height:1px;background:#227d9e"></div>
<div class="abs" style="left:98px;top:269.210px;width:1px;height:28.130px;background:#d3d2d0"></div>
<div class="abs" style="left:233px;top:269.210px;width:1px;height:28.130px;background:#d3d2d0"></div>
<div class="abs" style="left:548px;top:269.210px;width:1px;height:28.130px;background:#d3d2d0"></div>
<div class="abs" style="left:683px;top:269.210px;width:1px;height:28.130px;background:#d3d2d0"></div>
<div class="abs" style="left:818px;top:269.210px;width:1px;height:28.130px;background:#d3d2d0"></div>
<div class="abs" style="left:953px;top:269.210px;width:1px;height:28.130px;background:#d3d2d0"></div>
<div class="abs" style="left:1088px;top:269.210px;width:1px;height:28.130px;background:#d3d2d0"></div>
<div class="abs" style="left:1223px;top:269.210px;width:1px;height:28.130px;background:#d3d2d0"></div>
<div class="abs" style="left:1358px;top:269.210px;width:1px;height:28.130px;background:#d3d2d0"></div>
<div class="abs" style="left:1493px;top:269.210px;width:1px;height:28.130px;background:#d3d2d0"></div>
<div class="abs" style="left:22px;top:297.340px;width:76px;height:28.130px;background:#f2f2f2"></div>
<div class="abs" style="left:98px;top:297.340px;width:135px;height:28.130px;background:#ffffff"></div>
<div class="abs" style="left:233px;top:297.340px;width:315px;height:28.130px;background:#ffffff"></div>
<div class="abs" style="left:548px;top:297.340px;width:135px;height:28.130px;background:#f2f2f2"></div>
<div class="abs" style="left:683px;top:297.340px;width:135px;height:28.130px;background:#f2f2f2"></div>
<div class="abs" style="left:818px;top:297.340px;width:135px;height:28.130px;background:#f2f2f2"></div>
<div class="abs" style="left:953px;top:297.340px;width:135px;height:28.130px;background:#f2f2f2"></div>
<div class="abs" style="left:1088px;top:297.340px;width:135px;height:28.130px;background:#f2f2f2"></div>
<div class="abs" style="left:1223px;top:297.340px;width:135px;height:28.130px;background:#f2f2f2"></div>
<div class="abs" style="left:1358px;top:297.340px;width:135px;height:28.130px;background:#f2f2f2"></div>
<div class="abs" style="left:1493px;top:297.340px;width:135px;height:28.130px;background:#f2f2f2"></div>
<div class="abs" style="left:22px;top:297.340px;width:8px;height:28.130px;background:#07526c"></div>
<div class="abs" style="left:30px;top:297.340px;width:1px;height:28.130px;background:#e8e8e8"></div>
<div class="abs" style="left:31px;top:297.340px;width:8px;height:28.130px;background:#227d9e"></div>
<div class="t" style="left:42.50px;top:300.93px;font-size:16px;line-height:20px;color:#1f1e1c;">2.1</div>
<div class="t" style="left:109.20px;top:301.03px;font-size:15.7px;line-height:20px;color:#1f1e1c;">5S.02.01</div>
<div class="t" style="left:283.30px;top:300.93px;font-size:16px;line-height:20px;color:#1f1e1c;">Excavation</div>
<div class="t" style="right:954.50px;top:300.25px;font-size:16.5px;line-height:21px;color:#1f1e1c;">$1,400,000.00</div>
<div class="t" style="right:819.50px;top:300.25px;font-size:16.5px;line-height:21px;color:#1f1e1c;">$0.00</div>
<div class="t" style="right:684.50px;top:300.25px;font-size:16.5px;line-height:21px;color:#1f1e1c;">$0.00</div>
<div class="t" style="right:549.50px;top:300.25px;font-size:16.5px;line-height:21px;color:#1f1e1c;">$1,400,000.00</div>
<div class="t" style="right:414.50px;top:300.25px;font-size:16.5px;line-height:21px;color:#1f1e1c;">$0.00</div>
<div class="t" style="right:279.50px;top:300.25px;font-size:16.5px;line-height:21px;color:#1f1e1c;">$0.00</div>
<div class="t" style="right:144.50px;top:300.25px;font-size:16.5px;line-height:21px;color:#1f1e1c;">$35,000.00</div>
<div class="t" style="right:9.50px;top:300.25px;font-size:16.5px;line-height:21px;color:#1f1e1c;">$1,540,000.00</div>
<div class="abs" style="left:39px;top:324.470px;width:1588px;height:1px;background:#d3d2d0"></div>
<div class="abs" style="left:98px;top:297.340px;width:1px;height:28.130px;background:#d3d2d0"></div>
<div class="abs" style="left:233px;top:297.340px;width:1px;height:28.130px;background:#d3d2d0"></div>
<div class="abs" style="left:548px;top:297.340px;width:1px;height:28.130px;background:#d3d2d0"></div>
<div class="abs" style="left:683px;top:297.340px;width:1px;height:28.130px;background:#d3d2d0"></div>
<div class="abs" style="left:818px;top:297.340px;width:1px;height:28.130px;background:#d3d2d0"></div>
<div class="abs" style="left:953px;top:297.340px;width:1px;height:28.130px;background:#d3d2d0"></div>
<div class="abs" style="left:1088px;top:297.340px;width:1px;height:28.130px;background:#d3d2d0"></div>
<div class="abs" style="left:1223px;top:297.340px;width:1px;height:28.130px;background:#d3d2d0"></div>
<div class="abs" style="left:1358px;top:297.340px;width:1px;height:28.130px;background:#d3d2d0"></div>
<div class="abs" style="left:1493px;top:297.340px;width:1px;height:28.130px;background:#d3d2d0"></div>
<div class="abs" style="left:22px;top:325.470px;width:76px;height:28.130px;background:#f2f2f2"></div>
<div class="abs" style="left:98px;top:325.470px;width:135px;height:28.130px;background:#ffffff"></div>
<div class="abs" style="left:233px;top:325.470px;width:315px;height:28.130px;background:#ffffff"></div>
<div class="abs" style="left:548px;top:325.470px;width:135px;height:28.130px;background:#f2f2f2"></div>
<div class="abs" style="left:683px;top:325.470px;width:135px;height:28.130px;background:#f2f2f2"></div>
<div class="abs" style="left:818px;top:325.470px;width:135px;height:28.130px;background:#f2f2f2"></div>
<div class="abs" style="left:953px;top:325.470px;width:135px;height:28.130px;background:#f2f2f2"></div>
<div class="abs" style="left:1088px;top:325.470px;width:135px;height:28.130px;background:#f2f2f2"></div>
<div class="abs" style="left:1223px;top:325.470px;width:135px;height:28.130px;background:#f2f2f2"></div>
<div class="abs" style="left:1358px;top:325.470px;width:135px;height:28.130px;background:#f2f2f2"></div>
<div class="abs" style="left:1493px;top:325.470px;width:135px;height:28.130px;background:#f2f2f2"></div>
<div class="abs" style="left:22px;top:325.470px;width:8px;height:28.130px;background:#07526c"></div>
<div class="abs" style="left:30px;top:325.470px;width:1px;height:28.130px;background:#e8e8e8"></div>
<div class="abs" style="left:31px;top:325.470px;width:8px;height:28.130px;background:#227d9e"></div>
<div class="t" style="left:42.50px;top:329.06px;font-size:16px;line-height:20px;color:#1f1e1c;">2.2</div>
<div class="t" style="left:109.20px;top:329.16px;font-size:15.7px;line-height:20px;color:#1f1e1c;">5S.02.02</div>
<div class="t" style="left:283.30px;top:329.06px;font-size:16px;line-height:20px;color:#1f1e1c;">Piling</div>
<div class="t" style="right:954.50px;top:328.38px;font-size:16.5px;line-height:21px;color:#1f1e1c;">$4,480,000.00</div>
<div class="t" style="right:819.50px;top:328.38px;font-size:16.5px;line-height:21px;color:#1f1e1c;">$0.00</div>
<div class="t" style="right:684.50px;top:328.38px;font-size:16.5px;line-height:21px;color:#1f1e1c;">$0.00</div>
<div class="t" style="right:549.50px;top:328.38px;font-size:16.5px;line-height:21px;color:#1f1e1c;">$4,480,000.00</div>
<div class="t" style="right:414.50px;top:328.38px;font-size:16.5px;line-height:21px;color:#1f1e1c;">$0.00</div>
<div class="t" style="right:279.50px;top:328.38px;font-size:16.5px;line-height:21px;color:#1f1e1c;">$0.00</div>
<div class="t" style="right:144.50px;top:328.38px;font-size:16.5px;line-height:21px;color:#1f1e1c;">$224,000.00</div>
<div class="t" style="right:9.50px;top:328.38px;font-size:16.5px;line-height:21px;color:#1f1e1c;">$4,480,000.00</div>
<div class="abs" style="left:39px;top:352.600px;width:1588px;height:1px;background:#d3d2d0"></div>
<div class="abs" style="left:98px;top:325.470px;width:1px;height:28.130px;background:#d3d2d0"></div>
<div class="abs" style="left:233px;top:325.470px;width:1px;height:28.130px;background:#d3d2d0"></div>
<div class="abs" style="left:548px;top:325.470px;width:1px;height:28.130px;background:#d3d2d0"></div>
<div class="abs" style="left:683px;top:325.470px;width:1px;height:28.130px;background:#d3d2d0"></div>
<div class="abs" style="left:818px;top:325.470px;width:1px;height:28.130px;background:#d3d2d0"></div>
<div class="abs" style="left:953px;top:325.470px;width:1px;height:28.130px;background:#d3d2d0"></div>
<div class="abs" style="left:1088px;top:325.470px;width:1px;height:28.130px;background:#d3d2d0"></div>
<div class="abs" style="left:1223px;top:325.470px;width:1px;height:28.130px;background:#d3d2d0"></div>
<div class="abs" style="left:1358px;top:325.470px;width:1px;height:28.130px;background:#d3d2d0"></div>
<div class="abs" style="left:1493px;top:325.470px;width:1px;height:28.130px;background:#d3d2d0"></div>
<div class="abs" style="left:22px;top:353.600px;width:76px;height:28.130px;background:#f2f2f2"></div>
<div class="abs" style="left:98px;top:353.600px;width:135px;height:28.130px;background:#ffffff"></div>
<div class="abs" style="left:233px;top:353.600px;width:315px;height:28.130px;background:#ffffff"></div>
<div class="abs" style="left:548px;top:353.600px;width:135px;height:28.130px;background:#f2f2f2"></div>
<div class="abs" style="left:683px;top:353.600px;width:135px;height:28.130px;background:#f2f2f2"></div>
<div class="abs" style="left:818px;top:353.600px;width:135px;height:28.130px;background:#f2f2f2"></div>
<div class="abs" style="left:953px;top:353.600px;width:135px;height:28.130px;background:#f2f2f2"></div>
<div class="abs" style="left:1088px;top:353.600px;width:135px;height:28.130px;background:#f2f2f2"></div>
<div class="abs" style="left:1223px;top:353.600px;width:135px;height:28.130px;background:#f2f2f2"></div>
<div class="abs" style="left:1358px;top:353.600px;width:135px;height:28.130px;background:#f2f2f2"></div>
<div class="abs" style="left:1493px;top:353.600px;width:135px;height:28.130px;background:#f2f2f2"></div>
<div class="abs" style="left:22px;top:353.600px;width:8px;height:28.130px;background:#07526c"></div>
<div class="abs" style="left:30px;top:353.600px;width:1px;height:28.130px;background:#e8e8e8"></div>
<div class="abs" style="left:31px;top:353.600px;width:8px;height:28.130px;background:#227d9e"></div>
<div class="t" style="left:42.50px;top:357.19px;font-size:16px;line-height:20px;color:#1f1e1c;">2.3</div>
<div class="t" style="left:109.20px;top:357.29px;font-size:15.7px;line-height:20px;color:#1f1e1c;">5S.02.03</div>
<div class="t" style="left:283.30px;top:357.19px;font-size:16px;line-height:20px;color:#1f1e1c;">Foundations</div>
<div class="t" style="right:954.50px;top:356.51px;font-size:16.5px;line-height:21px;color:#1f1e1c;">$2,660,000.00</div>
<div class="t" style="right:819.50px;top:356.51px;font-size:16.5px;line-height:21px;color:#1f1e1c;">$1,500.00</div>
<div class="t" style="right:684.50px;top:356.51px;font-size:16.5px;line-height:21px;color:#1f1e1c;">$0.00</div>
<div class="t" style="right:549.50px;top:356.51px;font-size:16.5px;line-height:21px;color:#1f1e1c;">$2,661,500.00</div>
<div class="t" style="right:414.50px;top:356.51px;font-size:16.5px;line-height:21px;color:#1f1e1c;">$0.00</div>
<div class="t" style="right:279.50px;top:356.51px;font-size:16.5px;line-height:21px;color:#1f1e1c;">$0.00</div>
<div class="t" style="right:144.50px;top:356.51px;font-size:16.5px;line-height:21px;color:#1f1e1c;">$133,000.00</div>
<div class="t" style="right:9.50px;top:356.51px;font-size:16.5px;line-height:21px;color:#1f1e1c;">$2,660,000.00</div>
<div class="abs" style="left:39px;top:380.730px;width:1588px;height:1px;background:#d3d2d0"></div>
<div class="abs" style="left:98px;top:353.600px;width:1px;height:28.130px;background:#d3d2d0"></div>
<div class="abs" style="left:233px;top:353.600px;width:1px;height:28.130px;background:#d3d2d0"></div>
<div class="abs" style="left:548px;top:353.600px;width:1px;height:28.130px;background:#d3d2d0"></div>
<div class="abs" style="left:683px;top:353.600px;width:1px;height:28.130px;background:#d3d2d0"></div>
<div class="abs" style="left:818px;top:353.600px;width:1px;height:28.130px;background:#d3d2d0"></div>
<div class="abs" style="left:953px;top:353.600px;width:1px;height:28.130px;background:#d3d2d0"></div>
<div class="abs" style="left:1088px;top:353.600px;width:1px;height:28.130px;background:#d3d2d0"></div>
<div class="abs" style="left:1223px;top:353.600px;width:1px;height:28.130px;background:#d3d2d0"></div>
<div class="abs" style="left:1358px;top:353.600px;width:1px;height:28.130px;background:#d3d2d0"></div>
<div class="abs" style="left:1493px;top:353.600px;width:1px;height:28.130px;background:#d3d2d0"></div>
<div class="abs" style="left:22px;top:381.730px;width:76px;height:28.130px;background:#f2f2f2"></div>
<div class="abs" style="left:98px;top:381.730px;width:135px;height:28.130px;background:#ffffff"></div>
<div class="abs" style="left:233px;top:381.730px;width:315px;height:28.130px;background:#ffffff"></div>
<div class="abs" style="left:548px;top:381.730px;width:135px;height:28.130px;background:#f2f2f2"></div>
<div class="abs" style="left:683px;top:381.730px;width:135px;height:28.130px;background:#f2f2f2"></div>
<div class="abs" style="left:818px;top:381.730px;width:135px;height:28.130px;background:#f2f2f2"></div>
<div class="abs" style="left:953px;top:381.730px;width:135px;height:28.130px;background:#f2f2f2"></div>
<div class="abs" style="left:1088px;top:381.730px;width:135px;height:28.130px;background:#f2f2f2"></div>
<div class="abs" style="left:1223px;top:381.730px;width:135px;height:28.130px;background:#f2f2f2"></div>
<div class="abs" style="left:1358px;top:381.730px;width:135px;height:28.130px;background:#f2f2f2"></div>
<div class="abs" style="left:1493px;top:381.730px;width:135px;height:28.130px;background:#f2f2f2"></div>
<div class="abs" style="left:22px;top:381.730px;width:8px;height:28.130px;background:#07526c"></div>
<div class="abs" style="left:30px;top:381.730px;width:1px;height:28.130px;background:#e8e8e8"></div>
<div class="abs" style="left:31px;top:381.730px;width:8px;height:28.130px;background:#227d9e"></div>
<div class="t" style="left:42.50px;top:385.32px;font-size:16px;line-height:20px;color:#1f1e1c;">2.4</div>
<div class="t" style="left:109.20px;top:385.42px;font-size:15.7px;line-height:20px;color:#1f1e1c;">5S.02.04</div>
<div class="t" style="left:283.30px;top:385.32px;font-size:16px;line-height:20px;color:#1f1e1c;">Slabs</div>
<div class="t" style="right:954.50px;top:384.64px;font-size:16.5px;line-height:21px;color:#1f1e1c;">$1,820,000.00</div>
<div class="t" style="right:819.50px;top:384.64px;font-size:16.5px;line-height:21px;color:#1f1e1c;">$0.00</div>
<div class="t" style="right:684.50px;top:384.64px;font-size:16.5px;line-height:21px;color:#1f1e1c;">$0.00</div>
<div class="t" style="right:549.50px;top:384.64px;font-size:16.5px;line-height:21px;color:#1f1e1c;">$1,820,000.00</div>
<div class="t" style="right:414.50px;top:384.64px;font-size:16.5px;line-height:21px;color:#1f1e1c;">$0.00</div>
<div class="t" style="right:279.50px;top:384.64px;font-size:16.5px;line-height:21px;color:#1f1e1c;">$0.00</div>
<div class="t" style="right:144.50px;top:384.64px;font-size:16.5px;line-height:21px;color:#1f1e1c;">$91,000.00</div>
<div class="t" style="right:9.50px;top:384.64px;font-size:16.5px;line-height:21px;color:#1f1e1c;">$1,820,000.00</div>
<div class="abs" style="left:39px;top:408.860px;width:1588px;height:1px;background:#d3d2d0"></div>
<div class="abs" style="left:98px;top:381.730px;width:1px;height:28.130px;background:#d3d2d0"></div>
<div class="abs" style="left:233px;top:381.730px;width:1px;height:28.130px;background:#d3d2d0"></div>
<div class="abs" style="left:548px;top:381.730px;width:1px;height:28.130px;background:#d3d2d0"></div>
<div class="abs" style="left:683px;top:381.730px;width:1px;height:28.130px;background:#d3d2d0"></div>
<div class="abs" style="left:818px;top:381.730px;width:1px;height:28.130px;background:#d3d2d0"></div>
<div class="abs" style="left:953px;top:381.730px;width:1px;height:28.130px;background:#d3d2d0"></div>
<div class="abs" style="left:1088px;top:381.730px;width:1px;height:28.130px;background:#d3d2d0"></div>
<div class="abs" style="left:1223px;top:381.730px;width:1px;height:28.130px;background:#d3d2d0"></div>
<div class="abs" style="left:1358px;top:381.730px;width:1px;height:28.130px;background:#d3d2d0"></div>
<div class="abs" style="left:1493px;top:381.730px;width:1px;height:28.130px;background:#d3d2d0"></div>
<div class="abs" style="left:22px;top:409.860px;width:76px;height:28.130px;background:#f2f2f2"></div>
<div class="abs" style="left:98px;top:409.860px;width:135px;height:28.130px;background:#ffffff"></div>
<div class="abs" style="left:233px;top:409.860px;width:315px;height:28.130px;background:#ffffff"></div>
<div class="abs" style="left:548px;top:409.860px;width:135px;height:28.130px;background:#f2f2f2"></div>
<div class="abs" style="left:683px;top:409.860px;width:135px;height:28.130px;background:#f2f2f2"></div>
<div class="abs" style="left:818px;top:409.860px;width:135px;height:28.130px;background:#f2f2f2"></div>
<div class="abs" style="left:953px;top:409.860px;width:135px;height:28.130px;background:#f2f2f2"></div>
<div class="abs" style="left:1088px;top:409.860px;width:135px;height:28.130px;background:#f2f2f2"></div>
<div class="abs" style="left:1223px;top:409.860px;width:135px;height:28.130px;background:#f2f2f2"></div>
<div class="abs" style="left:1358px;top:409.860px;width:135px;height:28.130px;background:#f2f2f2"></div>
<div class="abs" style="left:1493px;top:409.860px;width:135px;height:28.130px;background:#f2f2f2"></div>
<div class="abs" style="left:22px;top:409.860px;width:8px;height:28.130px;background:#07526c"></div>
<div class="abs" style="left:30px;top:409.860px;width:1px;height:28.130px;background:#e8e8e8"></div>
<div class="abs" style="left:31px;top:409.860px;width:8px;height:28.130px;background:#227d9e"></div>
<div class="t" style="left:42.50px;top:413.45px;font-size:16px;line-height:20px;color:#1f1e1c;">2.5</div>
<div class="t" style="left:109.20px;top:413.55px;font-size:15.7px;line-height:20px;color:#1f1e1c;">5S.02.05</div>
<div class="t" style="left:283.30px;top:413.45px;font-size:16px;line-height:20px;color:#1f1e1c;">Basement Walls</div>
<div class="t" style="right:954.50px;top:412.77px;font-size:16.5px;line-height:21px;color:#1f1e1c;">$2,380,000.00</div>
<div class="t" style="right:819.50px;top:412.77px;font-size:16.5px;line-height:21px;color:#1f1e1c;">$0.00</div>
<div class="t" style="right:684.50px;top:412.77px;font-size:16.5px;line-height:21px;color:#1f1e1c;">$0.00</div>
<div class="t" style="right:549.50px;top:412.77px;font-size:16.5px;line-height:21px;color:#1f1e1c;">$2,380,000.00</div>
<div class="t" style="right:414.50px;top:412.77px;font-size:16.5px;line-height:21px;color:#1f1e1c;">$0.00</div>
<div class="t" style="right:279.50px;top:412.77px;font-size:16.5px;line-height:21px;color:#1f1e1c;">$0.00</div>
<div class="t" style="right:144.50px;top:412.77px;font-size:16.5px;line-height:21px;color:#1f1e1c;">$119,000.00</div>
<div class="t" style="right:9.50px;top:412.77px;font-size:16.5px;line-height:21px;color:#1f1e1c;">$2,380,000.00</div>
<div class="abs" style="left:39px;top:436.990px;width:1588px;height:1px;background:#d3d2d0"></div>
<div class="abs" style="left:98px;top:409.860px;width:1px;height:28.130px;background:#d3d2d0"></div>
<div class="abs" style="left:233px;top:409.860px;width:1px;height:28.130px;background:#d3d2d0"></div>
<div class="abs" style="left:548px;top:409.860px;width:1px;height:28.130px;background:#d3d2d0"></div>
<div class="abs" style="left:683px;top:409.860px;width:1px;height:28.130px;background:#d3d2d0"></div>
<div class="abs" style="left:818px;top:409.860px;width:1px;height:28.130px;background:#d3d2d0"></div>
<div class="abs" style="left:953px;top:409.860px;width:1px;height:28.130px;background:#d3d2d0"></div>
<div class="abs" style="left:1088px;top:409.860px;width:1px;height:28.130px;background:#d3d2d0"></div>
<div class="abs" style="left:1223px;top:409.860px;width:1px;height:28.130px;background:#d3d2d0"></div>
<div class="abs" style="left:1358px;top:409.860px;width:1px;height:28.130px;background:#d3d2d0"></div>
<div class="abs" style="left:1493px;top:409.860px;width:1px;height:28.130px;background:#d3d2d0"></div>
<div class="abs" style="left:22px;top:437.990px;width:76px;height:28.130px;background:#f2f2f2"></div>
<div class="abs" style="left:98px;top:437.990px;width:135px;height:28.130px;background:#ffffff"></div>
<div class="abs" style="left:233px;top:437.990px;width:315px;height:28.130px;background:#ffffff"></div>
<div class="abs" style="left:548px;top:437.990px;width:135px;height:28.130px;background:#f2f2f2"></div>
<div class="abs" style="left:683px;top:437.990px;width:135px;height:28.130px;background:#f2f2f2"></div>
<div class="abs" style="left:818px;top:437.990px;width:135px;height:28.130px;background:#f2f2f2"></div>
<div class="abs" style="left:953px;top:437.990px;width:135px;height:28.130px;background:#f2f2f2"></div>
<div class="abs" style="left:1088px;top:437.990px;width:135px;height:28.130px;background:#f2f2f2"></div>
<div class="abs" style="left:1223px;top:437.990px;width:135px;height:28.130px;background:#f2f2f2"></div>
<div class="abs" style="left:1358px;top:437.990px;width:135px;height:28.130px;background:#f2f2f2"></div>
<div class="abs" style="left:1493px;top:437.990px;width:135px;height:28.130px;background:#f2f2f2"></div>
<div class="abs" style="left:22px;top:437.990px;width:8px;height:28.130px;background:#07526c"></div>
<div class="abs" style="left:30px;top:437.990px;width:1px;height:28.130px;background:#e8e8e8"></div>
<div class="abs" style="left:31px;top:437.990px;width:8px;height:28.130px;background:#227d9e"></div>
<div class="t" style="left:42.50px;top:441.58px;font-size:16px;line-height:20px;color:#1f1e1c;">2.6</div>
<div class="t" style="left:109.20px;top:441.68px;font-size:15.7px;line-height:20px;color:#1f1e1c;">5S.02.06</div>
<div class="t" style="left:283.30px;top:441.58px;font-size:16px;line-height:20px;color:#1f1e1c;">Waterproofing</div>
<div class="t" style="right:954.50px;top:440.90px;font-size:16.5px;line-height:21px;color:#1f1e1c;">$1,260,000.00</div>
<div class="t" style="right:819.50px;top:440.90px;font-size:16.5px;line-height:21px;color:#1f1e1c;">$0.00</div>
<div class="t" style="right:684.50px;top:440.90px;font-size:16.5px;line-height:21px;color:#1f1e1c;">$0.00</div>
<div class="t" style="right:549.50px;top:440.90px;font-size:16.5px;line-height:21px;color:#1f1e1c;">$1,260,000.00</div>
<div class="t" style="right:414.50px;top:440.90px;font-size:16.5px;line-height:21px;color:#1f1e1c;">$0.00</div>
<div class="t" style="right:279.50px;top:440.90px;font-size:16.5px;line-height:21px;color:#1f1e1c;">$0.00</div>
<div class="t" style="right:144.50px;top:440.90px;font-size:16.5px;line-height:21px;color:#1f1e1c;">$63,000.00</div>
<div class="t" style="right:9.50px;top:440.90px;font-size:16.5px;line-height:21px;color:#1f1e1c;">$1,260,000.00</div>
<div class="abs" style="left:39px;top:465.120px;width:1588px;height:1px;background:#d3d2d0"></div>
<div class="abs" style="left:98px;top:437.990px;width:1px;height:28.130px;background:#d3d2d0"></div>
<div class="abs" style="left:233px;top:437.990px;width:1px;height:28.130px;background:#d3d2d0"></div>
<div class="abs" style="left:548px;top:437.990px;width:1px;height:28.130px;background:#d3d2d0"></div>
<div class="abs" style="left:683px;top:437.990px;width:1px;height:28.130px;background:#d3d2d0"></div>
<div class="abs" style="left:818px;top:437.990px;width:1px;height:28.130px;background:#d3d2d0"></div>
<div class="abs" style="left:953px;top:437.990px;width:1px;height:28.130px;background:#d3d2d0"></div>
<div class="abs" style="left:1088px;top:437.990px;width:1px;height:28.130px;background:#d3d2d0"></div>
<div class="abs" style="left:1223px;top:437.990px;width:1px;height:28.130px;background:#d3d2d0"></div>
<div class="abs" style="left:1358px;top:437.990px;width:1px;height:28.130px;background:#d3d2d0"></div>
<div class="abs" style="left:1493px;top:437.990px;width:1px;height:28.130px;background:#d3d2d0"></div>
<div class="abs" style="left:22px;top:466.120px;width:76px;height:28.130px;background:#227d9e"></div>
<div class="abs" style="left:98px;top:466.120px;width:135px;height:28.130px;background:#227d9e"></div>
<div class="abs" style="left:233px;top:466.120px;width:315px;height:28.130px;background:#227d9e"></div>
<div class="abs" style="left:548px;top:466.120px;width:135px;height:28.130px;background:#227d9e"></div>
<div class="abs" style="left:683px;top:466.120px;width:135px;height:28.130px;background:#227d9e"></div>
<div class="abs" style="left:818px;top:466.120px;width:135px;height:28.130px;background:#227d9e"></div>
<div class="abs" style="left:953px;top:466.120px;width:135px;height:28.130px;background:#227d9e"></div>
<div class="abs" style="left:1088px;top:466.120px;width:135px;height:28.130px;background:#227d9e"></div>
<div class="abs" style="left:1223px;top:466.120px;width:135px;height:28.130px;background:#227d9e"></div>
<div class="abs" style="left:1358px;top:466.120px;width:135px;height:28.130px;background:#227d9e"></div>
<div class="abs" style="left:1493px;top:466.120px;width:135px;height:28.130px;background:#227d9e"></div>
<div class="abs" style="left:22px;top:466.120px;width:8px;height:28.130px;background:#07526c"></div>
<div class="abs" style="left:30px;top:466.120px;width:1px;height:28.130px;background:#e8e8e8"></div>
<div class="t" style="left:35.50px;top:469.71px;font-size:16px;line-height:20px;color:#ffffff;-webkit-text-stroke:0.3px #ffffff;">3</div>
<div class="t" style="left:109.20px;top:469.81px;font-size:15.7px;line-height:20px;color:#ffffff;-webkit-text-stroke:0.3px #ffffff;">5S.03</div>
<svg style="left:0;top:0" width="600" height="900"><path d="M240.29999999999995 476.15 H254.5 L247.39999999999998 483.35Z" fill="#fff"/></svg>
<div class="t" style="left:260.50px;top:469.71px;font-size:16px;line-height:20px;color:#ffffff;-webkit-text-stroke:0.3px #ffffff;">Super Structure</div>
<div class="t" style="left:558.50px;top:469.03px;font-size:16.5px;line-height:21px;color:#ffffff;-webkit-text-stroke:0.3px #ffffff;">$21,000,000....</div>
<div class="t" style="right:819.50px;top:469.03px;font-size:16.5px;line-height:21px;color:#ffffff;-webkit-text-stroke:0.3px #ffffff;">$0.00</div>
<div class="t" style="right:684.50px;top:469.03px;font-size:16.5px;line-height:21px;color:#ffffff;-webkit-text-stroke:0.3px #ffffff;">$0.00</div>
<div class="t" style="left:963.50px;top:469.03px;font-size:16.5px;line-height:21px;color:#ffffff;-webkit-text-stroke:0.3px #ffffff;">$21,000,000....</div>
<div class="t" style="right:414.50px;top:469.03px;font-size:16.5px;line-height:21px;color:#ffffff;-webkit-text-stroke:0.3px #ffffff;">$0.00</div>
<div class="t" style="right:279.50px;top:469.03px;font-size:16.5px;line-height:21px;color:#ffffff;-webkit-text-stroke:0.3px #ffffff;">$0.00</div>
<div class="t" style="right:144.50px;top:469.03px;font-size:16.5px;line-height:21px;color:#ffffff;-webkit-text-stroke:0.3px #ffffff;">$1,050,000.00</div>
<div class="t" style="left:1503.50px;top:469.03px;font-size:16.5px;line-height:21px;color:#ffffff;-webkit-text-stroke:0.3px #ffffff;">$21,000,000..</div>
<div class="abs" style="left:31px;top:493.250px;width:1596px;height:1px;background:#227d9e"></div>
<div class="abs" style="left:98px;top:466.120px;width:1px;height:28.130px;background:#d3d2d0"></div>
<div class="abs" style="left:233px;top:466.120px;width:1px;height:28.130px;background:#d3d2d0"></div>
<div class="abs" style="left:548px;top:466.120px;width:1px;height:28.130px;background:#d3d2d0"></div>
<div class="abs" style="left:683px;top:466.120px;width:1px;height:28.130px;background:#d3d2d0"></div>
<div class="abs" style="left:818px;top:466.120px;width:1px;height:28.130px;background:#d3d2d0"></div>
<div class="abs" style="left:953px;top:466.120px;width:1px;height:28.130px;background:#d3d2d0"></div>
<div class="abs" style="left:1088px;top:466.120px;width:1px;height:28.130px;background:#d3d2d0"></div>
<div class="abs" style="left:1223px;top:466.120px;width:1px;height:28.130px;background:#d3d2d0"></div>
<div class="abs" style="left:1358px;top:466.120px;width:1px;height:28.130px;background:#d3d2d0"></div>
<div class="abs" style="left:1493px;top:466.120px;width:1px;height:28.130px;background:#d3d2d0"></div>
<div class="abs" style="left:22px;top:494.250px;width:76px;height:28.130px;background:#f2f2f2"></div>
<div class="abs" style="left:98px;top:494.250px;width:135px;height:28.130px;background:#ffffff"></div>
<div class="abs" style="left:233px;top:494.250px;width:315px;height:28.130px;background:#ffffff"></div>
<div class="abs" style="left:548px;top:494.250px;width:135px;height:28.130px;background:#f2f2f2"></div>
<div class="abs" style="left:683px;top:494.250px;width:135px;height:28.130px;background:#f2f2f2"></div>
<div class="abs" style="left:818px;top:494.250px;width:135px;height:28.130px;background:#f2f2f2"></div>
<div class="abs" style="left:953px;top:494.250px;width:135px;height:28.130px;background:#f2f2f2"></div>
<div class="abs" style="left:1088px;top:494.250px;width:135px;height:28.130px;background:#f2f2f2"></div>
<div class="abs" style="left:1223px;top:494.250px;width:135px;height:28.130px;background:#f2f2f2"></div>
<div class="abs" style="left:1358px;top:494.250px;width:135px;height:28.130px;background:#f2f2f2"></div>
<div class="abs" style="left:1493px;top:494.250px;width:135px;height:28.130px;background:#f2f2f2"></div>
<div class="abs" style="left:22px;top:494.250px;width:8px;height:28.130px;background:#07526c"></div>
<div class="abs" style="left:30px;top:494.250px;width:1px;height:28.130px;background:#e8e8e8"></div>
<div class="abs" style="left:31px;top:494.250px;width:8px;height:28.130px;background:#227d9e"></div>
<div class="t" style="left:42.50px;top:497.84px;font-size:16px;line-height:20px;color:#1f1e1c;">3.1</div>
<div class="t" style="left:109.20px;top:497.94px;font-size:15.7px;line-height:20px;color:#1f1e1c;">5S.03.01</div>
<div class="t" style="left:283.30px;top:497.84px;font-size:16px;line-height:20px;color:#1f1e1c;">Structural Frame</div>
<div class="t" style="right:954.50px;top:497.16px;font-size:16.5px;line-height:21px;color:#1f1e1c;">$2,520,000.00</div>
<div class="t" style="right:819.50px;top:497.16px;font-size:16.5px;line-height:21px;color:#1f1e1c;">$0.00</div>
<div class="t" style="right:684.50px;top:497.16px;font-size:16.5px;line-height:21px;color:#1f1e1c;">$0.00</div>
<div class="t" style="right:549.50px;top:497.16px;font-size:16.5px;line-height:21px;color:#1f1e1c;">$2,520,000.00</div>
<div class="t" style="right:414.50px;top:497.16px;font-size:16.5px;line-height:21px;color:#1f1e1c;">$0.00</div>
<div class="t" style="right:279.50px;top:497.16px;font-size:16.5px;line-height:21px;color:#1f1e1c;">$0.00</div>
<div class="t" style="right:144.50px;top:497.16px;font-size:16.5px;line-height:21px;color:#1f1e1c;">$126,000.00</div>
<div class="t" style="right:9.50px;top:497.16px;font-size:16.5px;line-height:21px;color:#1f1e1c;">$2,520,000.00</div>
<div class="abs" style="left:39px;top:521.380px;width:1588px;height:1px;background:#d3d2d0"></div>
<div class="abs" style="left:98px;top:494.250px;width:1px;height:28.130px;background:#d3d2d0"></div>
<div class="abs" style="left:233px;top:494.250px;width:1px;height:28.130px;background:#d3d2d0"></div>
<div class="abs" style="left:548px;top:494.250px;width:1px;height:28.130px;background:#d3d2d0"></div>
<div class="abs" style="left:683px;top:494.250px;width:1px;height:28.130px;background:#d3d2d0"></div>
<div class="abs" style="left:818px;top:494.250px;width:1px;height:28.130px;background:#d3d2d0"></div>
<div class="abs" style="left:953px;top:494.250px;width:1px;height:28.130px;background:#d3d2d0"></div>
<div class="abs" style="left:1088px;top:494.250px;width:1px;height:28.130px;background:#d3d2d0"></div>
<div class="abs" style="left:1223px;top:494.250px;width:1px;height:28.130px;background:#d3d2d0"></div>
<div class="abs" style="left:1358px;top:494.250px;width:1px;height:28.130px;background:#d3d2d0"></div>
<div class="abs" style="left:1493px;top:494.250px;width:1px;height:28.130px;background:#d3d2d0"></div>
<div class="abs" style="left:22px;top:522.380px;width:76px;height:28.130px;background:#f2f2f2"></div>
<div class="abs" style="left:98px;top:522.380px;width:135px;height:28.130px;background:#ffffff"></div>
<div class="abs" style="left:233px;top:522.380px;width:315px;height:28.130px;background:#ffffff"></div>
<div class="abs" style="left:548px;top:522.380px;width:135px;height:28.130px;background:#f2f2f2"></div>
<div class="abs" style="left:683px;top:522.380px;width:135px;height:28.130px;background:#f2f2f2"></div>
<div class="abs" style="left:818px;top:522.380px;width:135px;height:28.130px;background:#f2f2f2"></div>
<div class="abs" style="left:953px;top:522.380px;width:135px;height:28.130px;background:#f2f2f2"></div>
<div class="abs" style="left:1088px;top:522.380px;width:135px;height:28.130px;background:#f2f2f2"></div>
<div class="abs" style="left:1223px;top:522.380px;width:135px;height:28.130px;background:#f2f2f2"></div>
<div class="abs" style="left:1358px;top:522.380px;width:135px;height:28.130px;background:#f2f2f2"></div>
<div class="abs" style="left:1493px;top:522.380px;width:135px;height:28.130px;background:#f2f2f2"></div>
<div class="abs" style="left:22px;top:522.380px;width:8px;height:28.130px;background:#07526c"></div>
<div class="abs" style="left:30px;top:522.380px;width:1px;height:28.130px;background:#e8e8e8"></div>
<div class="abs" style="left:31px;top:522.380px;width:8px;height:28.130px;background:#227d9e"></div>
<div class="t" style="left:42.50px;top:525.97px;font-size:16px;line-height:20px;color:#1f1e1c;">3.2</div>
<div class="t" style="left:109.20px;top:526.07px;font-size:15.7px;line-height:20px;color:#1f1e1c;">5S.03.02</div>
<div class="t" style="left:283.30px;top:525.97px;font-size:16px;line-height:20px;color:#1f1e1c;">Floors</div>
<div class="t" style="right:954.50px;top:525.29px;font-size:16.5px;line-height:21px;color:#1f1e1c;">$6,090,000.00</div>
<div class="t" style="right:819.50px;top:525.29px;font-size:16.5px;line-height:21px;color:#1f1e1c;">$0.00</div>
<div class="t" style="right:684.50px;top:525.29px;font-size:16.5px;line-height:21px;color:#1f1e1c;">$0.00</div>
<div class="t" style="right:549.50px;top:525.29px;font-size:16.5px;line-height:21px;color:#1f1e1c;">$6,090,000.00</div>
<div class="t" style="right:414.50px;top:525.29px;font-size:16.5px;line-height:21px;color:#1f1e1c;">$0.00</div>
<div class="t" style="right:279.50px;top:525.29px;font-size:16.5px;line-height:21px;color:#1f1e1c;">$0.00</div>
<div class="t" style="right:144.50px;top:525.29px;font-size:16.5px;line-height:21px;color:#1f1e1c;">$304,500.00</div>
<div class="t" style="right:9.50px;top:525.29px;font-size:16.5px;line-height:21px;color:#1f1e1c;">$6,090,000.00</div>
<div class="abs" style="left:39px;top:549.510px;width:1588px;height:1px;background:#d3d2d0"></div>
<div class="abs" style="left:98px;top:522.380px;width:1px;height:28.130px;background:#d3d2d0"></div>
<div class="abs" style="left:233px;top:522.380px;width:1px;height:28.130px;background:#d3d2d0"></div>
<div class="abs" style="left:548px;top:522.380px;width:1px;height:28.130px;background:#d3d2d0"></div>
<div class="abs" style="left:683px;top:522.380px;width:1px;height:28.130px;background:#d3d2d0"></div>
<div class="abs" style="left:818px;top:522.380px;width:1px;height:28.130px;background:#d3d2d0"></div>
<div class="abs" style="left:953px;top:522.380px;width:1px;height:28.130px;background:#d3d2d0"></div>
<div class="abs" style="left:1088px;top:522.380px;width:1px;height:28.130px;background:#d3d2d0"></div>
<div class="abs" style="left:1223px;top:522.380px;width:1px;height:28.130px;background:#d3d2d0"></div>
<div class="abs" style="left:1358px;top:522.380px;width:1px;height:28.130px;background:#d3d2d0"></div>
<div class="abs" style="left:1493px;top:522.380px;width:1px;height:28.130px;background:#d3d2d0"></div>
<div class="abs" style="left:22px;top:550.510px;width:76px;height:28.130px;background:#f2f2f2"></div>
<div class="abs" style="left:98px;top:550.510px;width:135px;height:28.130px;background:#ffffff"></div>
<div class="abs" style="left:233px;top:550.510px;width:315px;height:28.130px;background:#ffffff"></div>
<div class="abs" style="left:548px;top:550.510px;width:135px;height:28.130px;background:#f2f2f2"></div>
<div class="abs" style="left:683px;top:550.510px;width:135px;height:28.130px;background:#f2f2f2"></div>
<div class="abs" style="left:818px;top:550.510px;width:135px;height:28.130px;background:#f2f2f2"></div>
<div class="abs" style="left:953px;top:550.510px;width:135px;height:28.130px;background:#f2f2f2"></div>
<div class="abs" style="left:1088px;top:550.510px;width:135px;height:28.130px;background:#f2f2f2"></div>
<div class="abs" style="left:1223px;top:550.510px;width:135px;height:28.130px;background:#f2f2f2"></div>
<div class="abs" style="left:1358px;top:550.510px;width:135px;height:28.130px;background:#f2f2f2"></div>
<div class="abs" style="left:1493px;top:550.510px;width:135px;height:28.130px;background:#f2f2f2"></div>
<div class="abs" style="left:22px;top:550.510px;width:8px;height:28.130px;background:#07526c"></div>
<div class="abs" style="left:30px;top:550.510px;width:1px;height:28.130px;background:#e8e8e8"></div>
<div class="abs" style="left:31px;top:550.510px;width:8px;height:28.130px;background:#227d9e"></div>
<div class="t" style="left:42.50px;top:554.10px;font-size:16px;line-height:20px;color:#1f1e1c;">3.3</div>
<div class="t" style="left:109.20px;top:554.20px;font-size:15.7px;line-height:20px;color:#1f1e1c;">5S.03.03</div>
<div class="t" style="left:283.30px;top:554.10px;font-size:16px;line-height:20px;color:#1f1e1c;">Roof</div>
<div class="t" style="right:954.50px;top:553.42px;font-size:16.5px;line-height:21px;color:#1f1e1c;">$3,360,000.00</div>
<div class="t" style="right:819.50px;top:553.42px;font-size:16.5px;line-height:21px;color:#1f1e1c;">$0.00</div>
<div class="t" style="right:684.50px;top:553.42px;font-size:16.5px;line-height:21px;color:#1f1e1c;">$0.00</div>
<div class="t" style="right:549.50px;top:553.42px;font-size:16.5px;line-height:21px;color:#1f1e1c;">$3,360,000.00</div>
<div class="t" style="right:414.50px;top:553.42px;font-size:16.5px;line-height:21px;color:#1f1e1c;">$0.00</div>
<div class="t" style="right:279.50px;top:553.42px;font-size:16.5px;line-height:21px;color:#1f1e1c;">$0.00</div>
<div class="t" style="right:144.50px;top:553.42px;font-size:16.5px;line-height:21px;color:#1f1e1c;">$168,000.00</div>
<div class="t" style="right:9.50px;top:553.42px;font-size:16.5px;line-height:21px;color:#1f1e1c;">$3,360,000.00</div>
<div class="abs" style="left:39px;top:577.640px;width:1588px;height:1px;background:#d3d2d0"></div>
<div class="abs" style="left:98px;top:550.510px;width:1px;height:28.130px;background:#d3d2d0"></div>
<div class="abs" style="left:233px;top:550.510px;width:1px;height:28.130px;background:#d3d2d0"></div>
<div class="abs" style="left:548px;top:550.510px;width:1px;height:28.130px;background:#d3d2d0"></div>
<div class="abs" style="left:683px;top:550.510px;width:1px;height:28.130px;background:#d3d2d0"></div>
<div class="abs" style="left:818px;top:550.510px;width:1px;height:28.130px;background:#d3d2d0"></div>
<div class="abs" style="left:953px;top:550.510px;width:1px;height:28.130px;background:#d3d2d0"></div>
<div class="abs" style="left:1088px;top:550.510px;width:1px;height:28.130px;background:#d3d2d0"></div>
<div class="abs" style="left:1223px;top:550.510px;width:1px;height:28.130px;background:#d3d2d0"></div>
<div class="abs" style="left:1358px;top:550.510px;width:1px;height:28.130px;background:#d3d2d0"></div>
<div class="abs" style="left:1493px;top:550.510px;width:1px;height:28.130px;background:#d3d2d0"></div>
<div class="abs" style="left:22px;top:578.640px;width:76px;height:28.130px;background:#f2f2f2"></div>
<div class="abs" style="left:98px;top:578.640px;width:135px;height:28.130px;background:#ffffff"></div>
<div class="abs" style="left:233px;top:578.640px;width:315px;height:28.130px;background:#ffffff"></div>
<div class="abs" style="left:548px;top:578.640px;width:135px;height:28.130px;background:#f2f2f2"></div>
<div class="abs" style="left:683px;top:578.640px;width:135px;height:28.130px;background:#f2f2f2"></div>
<div class="abs" style="left:818px;top:578.640px;width:135px;height:28.130px;background:#f2f2f2"></div>
<div class="abs" style="left:953px;top:578.640px;width:135px;height:28.130px;background:#f2f2f2"></div>
<div class="abs" style="left:1088px;top:578.640px;width:135px;height:28.130px;background:#f2f2f2"></div>
<div class="abs" style="left:1223px;top:578.640px;width:135px;height:28.130px;background:#f2f2f2"></div>
<div class="abs" style="left:1358px;top:578.640px;width:135px;height:28.130px;background:#f2f2f2"></div>
<div class="abs" style="left:1493px;top:578.640px;width:135px;height:28.130px;background:#f2f2f2"></div>
<div class="abs" style="left:22px;top:578.640px;width:8px;height:28.130px;background:#07526c"></div>
<div class="abs" style="left:30px;top:578.640px;width:1px;height:28.130px;background:#e8e8e8"></div>
<div class="abs" style="left:31px;top:578.640px;width:8px;height:28.130px;background:#227d9e"></div>
<div class="t" style="left:42.50px;top:582.23px;font-size:16px;line-height:20px;color:#1f1e1c;">3.4</div>
<div class="t" style="left:109.20px;top:582.33px;font-size:15.7px;line-height:20px;color:#1f1e1c;">5S.03.04</div>
<div class="t" style="left:283.30px;top:582.23px;font-size:16px;line-height:20px;color:#1f1e1c;">Stairs and Ramps</div>
<div class="t" style="right:954.50px;top:581.55px;font-size:16.5px;line-height:21px;color:#1f1e1c;">$2,520,000.00</div>
<div class="t" style="right:819.50px;top:581.55px;font-size:16.5px;line-height:21px;color:#1f1e1c;">$0.00</div>
<div class="t" style="right:684.50px;top:581.55px;font-size:16.5px;line-height:21px;color:#1f1e1c;">$0.00</div>
<div class="t" style="right:549.50px;top:581.55px;font-size:16.5px;line-height:21px;color:#1f1e1c;">$2,520,000.00</div>
<div class="t" style="right:414.50px;top:581.55px;font-size:16.5px;line-height:21px;color:#1f1e1c;">$0.00</div>
<div class="t" style="right:279.50px;top:581.55px;font-size:16.5px;line-height:21px;color:#1f1e1c;">$0.00</div>
<div class="t" style="right:144.50px;top:581.55px;font-size:16.5px;line-height:21px;color:#1f1e1c;">$126,000.00</div>
<div class="t" style="right:9.50px;top:581.55px;font-size:16.5px;line-height:21px;color:#1f1e1c;">$2,520,000.00</div>
<div class="abs" style="left:39px;top:605.770px;width:1588px;height:1px;background:#d3d2d0"></div>
<div class="abs" style="left:98px;top:578.640px;width:1px;height:28.130px;background:#d3d2d0"></div>
<div class="abs" style="left:233px;top:578.640px;width:1px;height:28.130px;background:#d3d2d0"></div>
<div class="abs" style="left:548px;top:578.640px;width:1px;height:28.130px;background:#d3d2d0"></div>
<div class="abs" style="left:683px;top:578.640px;width:1px;height:28.130px;background:#d3d2d0"></div>
<div class="abs" style="left:818px;top:578.640px;width:1px;height:28.130px;background:#d3d2d0"></div>
<div class="abs" style="left:953px;top:578.640px;width:1px;height:28.130px;background:#d3d2d0"></div>
<div class="abs" style="left:1088px;top:578.640px;width:1px;height:28.130px;background:#d3d2d0"></div>
<div class="abs" style="left:1223px;top:578.640px;width:1px;height:28.130px;background:#d3d2d0"></div>
<div class="abs" style="left:1358px;top:578.640px;width:1px;height:28.130px;background:#d3d2d0"></div>
<div class="abs" style="left:1493px;top:578.640px;width:1px;height:28.130px;background:#d3d2d0"></div>
<div class="abs" style="left:22px;top:606.770px;width:76px;height:28.130px;background:#f2f2f2"></div>
<div class="abs" style="left:98px;top:606.770px;width:135px;height:28.130px;background:#ffffff"></div>
<div class="abs" style="left:233px;top:606.770px;width:315px;height:28.130px;background:#ffffff"></div>
<div class="abs" style="left:548px;top:606.770px;width:135px;height:28.130px;background:#f2f2f2"></div>
<div class="abs" style="left:683px;top:606.770px;width:135px;height:28.130px;background:#f2f2f2"></div>
<div class="abs" style="left:818px;top:606.770px;width:135px;height:28.130px;background:#f2f2f2"></div>
<div class="abs" style="left:953px;top:606.770px;width:135px;height:28.130px;background:#f2f2f2"></div>
<div class="abs" style="left:1088px;top:606.770px;width:135px;height:28.130px;background:#f2f2f2"></div>
<div class="abs" style="left:1223px;top:606.770px;width:135px;height:28.130px;background:#f2f2f2"></div>
<div class="abs" style="left:1358px;top:606.770px;width:135px;height:28.130px;background:#f2f2f2"></div>
<div class="abs" style="left:1493px;top:606.770px;width:135px;height:28.130px;background:#f2f2f2"></div>
<div class="abs" style="left:22px;top:606.770px;width:8px;height:28.130px;background:#07526c"></div>
<div class="abs" style="left:30px;top:606.770px;width:1px;height:28.130px;background:#e8e8e8"></div>
<div class="abs" style="left:31px;top:606.770px;width:8px;height:28.130px;background:#227d9e"></div>
<div class="t" style="left:42.50px;top:610.36px;font-size:16px;line-height:20px;color:#1f1e1c;">3.5</div>
<div class="t" style="left:109.20px;top:610.46px;font-size:15.7px;line-height:20px;color:#1f1e1c;">5S.03.05</div>
<div class="t" style="left:283.30px;top:610.36px;font-size:16px;line-height:20px;color:#1f1e1c;">Facade</div>
<div class="t" style="right:954.50px;top:609.68px;font-size:16.5px;line-height:21px;color:#1f1e1c;">$1,470,000.00</div>
<div class="t" style="right:819.50px;top:609.68px;font-size:16.5px;line-height:21px;color:#1f1e1c;">$0.00</div>
<div class="t" style="right:684.50px;top:609.68px;font-size:16.5px;line-height:21px;color:#1f1e1c;">$0.00</div>
<div class="t" style="right:549.50px;top:609.68px;font-size:16.5px;line-height:21px;color:#1f1e1c;">$1,470,000.00</div>
<div class="t" style="right:414.50px;top:609.68px;font-size:16.5px;line-height:21px;color:#1f1e1c;">$0.00</div>
<div class="t" style="right:279.50px;top:609.68px;font-size:16.5px;line-height:21px;color:#1f1e1c;">$0.00</div>
<div class="t" style="right:144.50px;top:609.68px;font-size:16.5px;line-height:21px;color:#1f1e1c;">$73,500.00</div>
<div class="t" style="right:9.50px;top:609.68px;font-size:16.5px;line-height:21px;color:#1f1e1c;">$1,470,000.00</div>
<div class="abs" style="left:39px;top:633.900px;width:1588px;height:1px;background:#d3d2d0"></div>
<div class="abs" style="left:98px;top:606.770px;width:1px;height:28.130px;background:#d3d2d0"></div>
<div class="abs" style="left:233px;top:606.770px;width:1px;height:28.130px;background:#d3d2d0"></div>
<div class="abs" style="left:548px;top:606.770px;width:1px;height:28.130px;background:#d3d2d0"></div>
<div class="abs" style="left:683px;top:606.770px;width:1px;height:28.130px;background:#d3d2d0"></div>
<div class="abs" style="left:818px;top:606.770px;width:1px;height:28.130px;background:#d3d2d0"></div>
<div class="abs" style="left:953px;top:606.770px;width:1px;height:28.130px;background:#d3d2d0"></div>
<div class="abs" style="left:1088px;top:606.770px;width:1px;height:28.130px;background:#d3d2d0"></div>
<div class="abs" style="left:1223px;top:606.770px;width:1px;height:28.130px;background:#d3d2d0"></div>
<div class="abs" style="left:1358px;top:606.770px;width:1px;height:28.130px;background:#d3d2d0"></div>
<div class="abs" style="left:1493px;top:606.770px;width:1px;height:28.130px;background:#d3d2d0"></div>
<div class="abs" style="left:22px;top:634.900px;width:76px;height:28.130px;background:#f2f2f2"></div>
<div class="abs" style="left:98px;top:634.900px;width:135px;height:28.130px;background:#ffffff"></div>
<div class="abs" style="left:233px;top:634.900px;width:315px;height:28.130px;background:#ffffff"></div>
<div class="abs" style="left:548px;top:634.900px;width:135px;height:28.130px;background:#f2f2f2"></div>
<div class="abs" style="left:683px;top:634.900px;width:135px;height:28.130px;background:#f2f2f2"></div>
<div class="abs" style="left:818px;top:634.900px;width:135px;height:28.130px;background:#f2f2f2"></div>
<div class="abs" style="left:953px;top:634.900px;width:135px;height:28.130px;background:#f2f2f2"></div>
<div class="abs" style="left:1088px;top:634.900px;width:135px;height:28.130px;background:#f2f2f2"></div>
<div class="abs" style="left:1223px;top:634.900px;width:135px;height:28.130px;background:#f2f2f2"></div>
<div class="abs" style="left:1358px;top:634.900px;width:135px;height:28.130px;background:#f2f2f2"></div>
<div class="abs" style="left:1493px;top:634.900px;width:135px;height:28.130px;background:#f2f2f2"></div>
<div class="abs" style="left:22px;top:634.900px;width:8px;height:28.130px;background:#07526c"></div>
<div class="abs" style="left:30px;top:634.900px;width:1px;height:28.130px;background:#e8e8e8"></div>
<div class="abs" style="left:31px;top:634.900px;width:8px;height:28.130px;background:#227d9e"></div>
<div class="t" style="left:42.50px;top:638.49px;font-size:16px;line-height:20px;color:#1f1e1c;">3.6</div>
<div class="t" style="left:109.20px;top:638.59px;font-size:15.7px;line-height:20px;color:#1f1e1c;">5S.03.06</div>
<div class="t" style="left:283.30px;top:638.49px;font-size:16px;line-height:20px;color:#1f1e1c;">External Walls</div>
<div class="t" style="right:954.50px;top:637.81px;font-size:16.5px;line-height:21px;color:#1f1e1c;">$2,940,000.00</div>
<div class="t" style="right:819.50px;top:637.81px;font-size:16.5px;line-height:21px;color:#1f1e1c;">$0.00</div>
<div class="t" style="right:684.50px;top:637.81px;font-size:16.5px;line-height:21px;color:#1f1e1c;">$0.00</div>
<div class="t" style="right:549.50px;top:637.81px;font-size:16.5px;line-height:21px;color:#1f1e1c;">$2,940,000.00</div>
<div class="t" style="right:414.50px;top:637.81px;font-size:16.5px;line-height:21px;color:#1f1e1c;">$0.00</div>
<div class="t" style="right:279.50px;top:637.81px;font-size:16.5px;line-height:21px;color:#1f1e1c;">$0.00</div>
<div class="t" style="right:144.50px;top:637.81px;font-size:16.5px;line-height:21px;color:#1f1e1c;">$147,000.00</div>
<div class="t" style="right:9.50px;top:637.81px;font-size:16.5px;line-height:21px;color:#1f1e1c;">$2,940,000.00</div>
<div class="abs" style="left:39px;top:662.030px;width:1588px;height:1px;background:#d3d2d0"></div>
<div class="abs" style="left:98px;top:634.900px;width:1px;height:28.130px;background:#d3d2d0"></div>
<div class="abs" style="left:233px;top:634.900px;width:1px;height:28.130px;background:#d3d2d0"></div>
<div class="abs" style="left:548px;top:634.900px;width:1px;height:28.130px;background:#d3d2d0"></div>
<div class="abs" style="left:683px;top:634.900px;width:1px;height:28.130px;background:#d3d2d0"></div>
<div class="abs" style="left:818px;top:634.900px;width:1px;height:28.130px;background:#d3d2d0"></div>
<div class="abs" style="left:953px;top:634.900px;width:1px;height:28.130px;background:#d3d2d0"></div>
<div class="abs" style="left:1088px;top:634.900px;width:1px;height:28.130px;background:#d3d2d0"></div>
<div class="abs" style="left:1223px;top:634.900px;width:1px;height:28.130px;background:#d3d2d0"></div>
<div class="abs" style="left:1358px;top:634.900px;width:1px;height:28.130px;background:#d3d2d0"></div>
<div class="abs" style="left:1493px;top:634.900px;width:1px;height:28.130px;background:#d3d2d0"></div>
<div class="abs" style="left:22px;top:663.030px;width:76px;height:28.130px;background:#f2f2f2"></div>
<div class="abs" style="left:98px;top:663.030px;width:135px;height:28.130px;background:#ffffff"></div>
<div class="abs" style="left:233px;top:663.030px;width:315px;height:28.130px;background:#ffffff"></div>
<div class="abs" style="left:548px;top:663.030px;width:135px;height:28.130px;background:#f2f2f2"></div>
<div class="abs" style="left:683px;top:663.030px;width:135px;height:28.130px;background:#f2f2f2"></div>
<div class="abs" style="left:818px;top:663.030px;width:135px;height:28.130px;background:#f2f2f2"></div>
<div class="abs" style="left:953px;top:663.030px;width:135px;height:28.130px;background:#f2f2f2"></div>
<div class="abs" style="left:1088px;top:663.030px;width:135px;height:28.130px;background:#f2f2f2"></div>
<div class="abs" style="left:1223px;top:663.030px;width:135px;height:28.130px;background:#f2f2f2"></div>
<div class="abs" style="left:1358px;top:663.030px;width:135px;height:28.130px;background:#f2f2f2"></div>
<div class="abs" style="left:1493px;top:663.030px;width:135px;height:28.130px;background:#f2f2f2"></div>
<div class="abs" style="left:22px;top:663.030px;width:8px;height:28.130px;background:#07526c"></div>
<div class="abs" style="left:30px;top:663.030px;width:1px;height:28.130px;background:#e8e8e8"></div>
<div class="abs" style="left:31px;top:663.030px;width:8px;height:28.130px;background:#227d9e"></div>
<div class="t" style="left:42.50px;top:666.62px;font-size:16px;line-height:20px;color:#1f1e1c;">3.7</div>
<div class="t" style="left:109.20px;top:666.72px;font-size:15.7px;line-height:20px;color:#1f1e1c;">5S.03.07</div>
<div class="t" style="left:283.30px;top:666.62px;font-size:16px;line-height:20px;color:#1f1e1c;">Windows and Doors</div>
<div class="t" style="right:954.50px;top:665.94px;font-size:16.5px;line-height:21px;color:#1f1e1c;">$2,100,000.00</div>
<div class="t" style="right:819.50px;top:665.94px;font-size:16.5px;line-height:21px;color:#1f1e1c;">$0.00</div>
<div class="t" style="right:684.50px;top:665.94px;font-size:16.5px;line-height:21px;color:#1f1e1c;">$0.00</div>
<div class="t" style="right:549.50px;top:665.94px;font-size:16.5px;line-height:21px;color:#1f1e1c;">$2,100,000.00</div>
<div class="t" style="right:414.50px;top:665.94px;font-size:16.5px;line-height:21px;color:#1f1e1c;">$0.00</div>
<div class="t" style="right:279.50px;top:665.94px;font-size:16.5px;line-height:21px;color:#1f1e1c;">$0.00</div>
<div class="t" style="right:144.50px;top:665.94px;font-size:16.5px;line-height:21px;color:#1f1e1c;">$105,000.00</div>
<div class="t" style="right:9.50px;top:665.94px;font-size:16.5px;line-height:21px;color:#1f1e1c;">$2,100,000.00</div>
<div class="abs" style="left:39px;top:690.160px;width:1588px;height:1px;background:#d3d2d0"></div>
<div class="abs" style="left:98px;top:663.030px;width:1px;height:28.130px;background:#d3d2d0"></div>
<div class="abs" style="left:233px;top:663.030px;width:1px;height:28.130px;background:#d3d2d0"></div>
<div class="abs" style="left:548px;top:663.030px;width:1px;height:28.130px;background:#d3d2d0"></div>
<div class="abs" style="left:683px;top:663.030px;width:1px;height:28.130px;background:#d3d2d0"></div>
<div class="abs" style="left:818px;top:663.030px;width:1px;height:28.130px;background:#d3d2d0"></div>
<div class="abs" style="left:953px;top:663.030px;width:1px;height:28.130px;background:#d3d2d0"></div>
<div class="abs" style="left:1088px;top:663.030px;width:1px;height:28.130px;background:#d3d2d0"></div>
<div class="abs" style="left:1223px;top:663.030px;width:1px;height:28.130px;background:#d3d2d0"></div>
<div class="abs" style="left:1358px;top:663.030px;width:1px;height:28.130px;background:#d3d2d0"></div>
<div class="abs" style="left:1493px;top:663.030px;width:1px;height:28.130px;background:#d3d2d0"></div>
<div class="abs" style="left:22px;top:691.160px;width:76px;height:28.130px;background:#227d9e"></div>
<div class="abs" style="left:98px;top:691.160px;width:135px;height:28.130px;background:#227d9e"></div>
<div class="abs" style="left:233px;top:691.160px;width:315px;height:28.130px;background:#227d9e"></div>
<div class="abs" style="left:548px;top:691.160px;width:135px;height:28.130px;background:#227d9e"></div>
<div class="abs" style="left:683px;top:691.160px;width:135px;height:28.130px;background:#227d9e"></div>
<div class="abs" style="left:818px;top:691.160px;width:135px;height:28.130px;background:#227d9e"></div>
<div class="abs" style="left:953px;top:691.160px;width:135px;height:28.130px;background:#227d9e"></div>
<div class="abs" style="left:1088px;top:691.160px;width:135px;height:28.130px;background:#227d9e"></div>
<div class="abs" style="left:1223px;top:691.160px;width:135px;height:28.130px;background:#227d9e"></div>
<div class="abs" style="left:1358px;top:691.160px;width:135px;height:28.130px;background:#227d9e"></div>
<div class="abs" style="left:1493px;top:691.160px;width:135px;height:28.130px;background:#227d9e"></div>
<div class="abs" style="left:22px;top:691.160px;width:8px;height:28.130px;background:#07526c"></div>
<div class="abs" style="left:30px;top:691.160px;width:1px;height:28.130px;background:#e8e8e8"></div>
<div class="t" style="left:35.50px;top:694.75px;font-size:16px;line-height:20px;color:#ffffff;-webkit-text-stroke:0.3px #ffffff;">4</div>
<div class="t" style="left:109.20px;top:694.85px;font-size:15.7px;line-height:20px;color:#ffffff;-webkit-text-stroke:0.3px #ffffff;">5S.04</div>
<svg style="left:0;top:0" width="600" height="900"><path d="M240.29999999999995 701.19 H254.5 L247.39999999999998 708.39Z" fill="#fff"/></svg>
<div class="t" style="left:260.50px;top:694.75px;font-size:16px;line-height:20px;color:#ffffff;-webkit-text-stroke:0.3px #ffffff;">Architectural Works</div>
<div class="t" style="left:558.50px;top:694.07px;font-size:16.5px;line-height:21px;color:#ffffff;-webkit-text-stroke:0.3px #ffffff;">$10,500,000....</div>
<div class="t" style="right:819.50px;top:694.07px;font-size:16.5px;line-height:21px;color:#ffffff;-webkit-text-stroke:0.3px #ffffff;">$0.00</div>
<div class="t" style="right:684.50px;top:694.07px;font-size:16.5px;line-height:21px;color:#ffffff;-webkit-text-stroke:0.3px #ffffff;">$0.00</div>
<div class="t" style="left:963.50px;top:694.07px;font-size:16.5px;line-height:21px;color:#ffffff;-webkit-text-stroke:0.3px #ffffff;">$10,500,000....</div>
<div class="t" style="right:414.50px;top:694.07px;font-size:16.5px;line-height:21px;color:#ffffff;-webkit-text-stroke:0.3px #ffffff;">$0.00</div>
<div class="t" style="right:279.50px;top:694.07px;font-size:16.5px;line-height:21px;color:#ffffff;-webkit-text-stroke:0.3px #ffffff;">$0.00</div>
<div class="t" style="left:1368.50px;top:694.07px;font-size:16.5px;line-height:21px;color:#ffffff;-webkit-text-stroke:0.3px #ffffff;">$10,500,000....</div>
<div class="t" style="left:1503.50px;top:694.07px;font-size:16.5px;line-height:21px;color:#ffffff;-webkit-text-stroke:0.3px #ffffff;">$10,500,000..</div>
<div class="abs" style="left:31px;top:718.290px;width:1596px;height:1px;background:#227d9e"></div>
<div class="abs" style="left:98px;top:691.160px;width:1px;height:28.130px;background:#d3d2d0"></div>
<div class="abs" style="left:233px;top:691.160px;width:1px;height:28.130px;background:#d3d2d0"></div>
<div class="abs" style="left:548px;top:691.160px;width:1px;height:28.130px;background:#d3d2d0"></div>
<div class="abs" style="left:683px;top:691.160px;width:1px;height:28.130px;background:#d3d2d0"></div>
<div class="abs" style="left:818px;top:691.160px;width:1px;height:28.130px;background:#d3d2d0"></div>
<div class="abs" style="left:953px;top:691.160px;width:1px;height:28.130px;background:#d3d2d0"></div>
<div class="abs" style="left:1088px;top:691.160px;width:1px;height:28.130px;background:#d3d2d0"></div>
<div class="abs" style="left:1223px;top:691.160px;width:1px;height:28.130px;background:#d3d2d0"></div>
<div class="abs" style="left:1358px;top:691.160px;width:1px;height:28.130px;background:#d3d2d0"></div>
<div class="abs" style="left:1493px;top:691.160px;width:1px;height:28.130px;background:#d3d2d0"></div>
<div class="abs" style="left:22px;top:719.290px;width:76px;height:28.130px;background:#f2f2f2"></div>
<div class="abs" style="left:98px;top:719.290px;width:135px;height:28.130px;background:#ffffff"></div>
<div class="abs" style="left:233px;top:719.290px;width:315px;height:28.130px;background:#ffffff"></div>
<div class="abs" style="left:548px;top:719.290px;width:135px;height:28.130px;background:#f2f2f2"></div>
<div class="abs" style="left:683px;top:719.290px;width:135px;height:28.130px;background:#f2f2f2"></div>
<div class="abs" style="left:818px;top:719.290px;width:135px;height:28.130px;background:#f2f2f2"></div>
<div class="abs" style="left:953px;top:719.290px;width:135px;height:28.130px;background:#f2f2f2"></div>
<div class="abs" style="left:1088px;top:719.290px;width:135px;height:28.130px;background:#f2f2f2"></div>
<div class="abs" style="left:1223px;top:719.290px;width:135px;height:28.130px;background:#f2f2f2"></div>
<div class="abs" style="left:1358px;top:719.290px;width:135px;height:28.130px;background:#f2f2f2"></div>
<div class="abs" style="left:1493px;top:719.290px;width:135px;height:28.130px;background:#f2f2f2"></div>
<div class="abs" style="left:22px;top:719.290px;width:8px;height:28.130px;background:#07526c"></div>
<div class="abs" style="left:30px;top:719.290px;width:1px;height:28.130px;background:#e8e8e8"></div>
<div class="abs" style="left:31px;top:719.290px;width:8px;height:28.130px;background:#227d9e"></div>
<div class="t" style="left:42.50px;top:722.88px;font-size:16px;line-height:20px;color:#1f1e1c;">4.1</div>
<div class="t" style="left:109.20px;top:722.98px;font-size:15.7px;line-height:20px;color:#1f1e1c;">5S.04.01</div>
<div class="t" style="left:283.30px;top:722.88px;font-size:16px;line-height:20px;color:#1f1e1c;">Internal Walls and Partitions</div>
<div class="t" style="right:954.50px;top:722.20px;font-size:16.5px;line-height:21px;color:#1f1e1c;">$1,785,000.00</div>
<div class="t" style="right:819.50px;top:722.20px;font-size:16.5px;line-height:21px;color:#1f1e1c;">$0.00</div>
<div class="t" style="right:684.50px;top:722.20px;font-size:16.5px;line-height:21px;color:#1f1e1c;">$0.00</div>
<div class="t" style="right:549.50px;top:722.20px;font-size:16.5px;line-height:21px;color:#1f1e1c;">$1,785,000.00</div>
<div class="t" style="right:414.50px;top:722.20px;font-size:16.5px;line-height:21px;color:#1f1e1c;">$0.00</div>
<div class="t" style="right:279.50px;top:722.20px;font-size:16.5px;line-height:21px;color:#1f1e1c;">$0.00</div>
<div class="t" style="right:144.50px;top:722.20px;font-size:16.5px;line-height:21px;color:#1f1e1c;">$1,785,000.00</div>
<div class="t" style="right:9.50px;top:722.20px;font-size:16.5px;line-height:21px;color:#1f1e1c;">$1,785,000.00</div>
<div class="abs" style="left:39px;top:746.420px;width:1588px;height:1px;background:#d3d2d0"></div>
<div class="abs" style="left:98px;top:719.290px;width:1px;height:28.130px;background:#d3d2d0"></div>
<div class="abs" style="left:233px;top:719.290px;width:1px;height:28.130px;background:#d3d2d0"></div>
<div class="abs" style="left:548px;top:719.290px;width:1px;height:28.130px;background:#d3d2d0"></div>
<div class="abs" style="left:683px;top:719.290px;width:1px;height:28.130px;background:#d3d2d0"></div>
<div class="abs" style="left:818px;top:719.290px;width:1px;height:28.130px;background:#d3d2d0"></div>
<div class="abs" style="left:953px;top:719.290px;width:1px;height:28.130px;background:#d3d2d0"></div>
<div class="abs" style="left:1088px;top:719.290px;width:1px;height:28.130px;background:#d3d2d0"></div>
<div class="abs" style="left:1223px;top:719.290px;width:1px;height:28.130px;background:#d3d2d0"></div>
<div class="abs" style="left:1358px;top:719.290px;width:1px;height:28.130px;background:#d3d2d0"></div>
<div class="abs" style="left:1493px;top:719.290px;width:1px;height:28.130px;background:#d3d2d0"></div>
<div class="abs" style="left:22px;top:747.420px;width:76px;height:28.130px;background:#f2f2f2"></div>
<div class="abs" style="left:98px;top:747.420px;width:135px;height:28.130px;background:#ffffff"></div>
<div class="abs" style="left:233px;top:747.420px;width:315px;height:28.130px;background:#ffffff"></div>
<div class="abs" style="left:548px;top:747.420px;width:135px;height:28.130px;background:#f2f2f2"></div>
<div class="abs" style="left:683px;top:747.420px;width:135px;height:28.130px;background:#f2f2f2"></div>
<div class="abs" style="left:818px;top:747.420px;width:135px;height:28.130px;background:#f2f2f2"></div>
<div class="abs" style="left:953px;top:747.420px;width:135px;height:28.130px;background:#f2f2f2"></div>
<div class="abs" style="left:1088px;top:747.420px;width:135px;height:28.130px;background:#f2f2f2"></div>
<div class="abs" style="left:1223px;top:747.420px;width:135px;height:28.130px;background:#f2f2f2"></div>
<div class="abs" style="left:1358px;top:747.420px;width:135px;height:28.130px;background:#f2f2f2"></div>
<div class="abs" style="left:1493px;top:747.420px;width:135px;height:28.130px;background:#f2f2f2"></div>
<div class="abs" style="left:22px;top:747.420px;width:8px;height:28.130px;background:#07526c"></div>
<div class="abs" style="left:30px;top:747.420px;width:1px;height:28.130px;background:#e8e8e8"></div>
<div class="abs" style="left:31px;top:747.420px;width:8px;height:28.130px;background:#227d9e"></div>
<div class="t" style="left:42.50px;top:751.01px;font-size:16px;line-height:20px;color:#1f1e1c;">4.2</div>
<div class="t" style="left:109.20px;top:751.11px;font-size:15.7px;line-height:20px;color:#1f1e1c;">5S.04.02</div>
<div class="t" style="left:283.30px;top:751.01px;font-size:16px;line-height:20px;color:#1f1e1c;">Handrails</div>
<div class="t" style="right:954.50px;top:750.33px;font-size:16.5px;line-height:21px;color:#1f1e1c;">$840,000.00</div>
<div class="t" style="right:819.50px;top:750.33px;font-size:16.5px;line-height:21px;color:#1f1e1c;">$0.00</div>
<div class="t" style="right:684.50px;top:750.33px;font-size:16.5px;line-height:21px;color:#1f1e1c;">$0.00</div>
<div class="t" style="right:549.50px;top:750.33px;font-size:16.5px;line-height:21px;color:#1f1e1c;">$840,000.00</div>
<div class="t" style="right:414.50px;top:750.33px;font-size:16.5px;line-height:21px;color:#1f1e1c;">$0.00</div>
<div class="t" style="right:279.50px;top:750.33px;font-size:16.5px;line-height:21px;color:#1f1e1c;">$0.00</div>
<div class="t" style="right:144.50px;top:750.33px;font-size:16.5px;line-height:21px;color:#1f1e1c;">$840,000.00</div>
<div class="t" style="right:9.50px;top:750.33px;font-size:16.5px;line-height:21px;color:#1f1e1c;">$840,000.00</div>
<div class="abs" style="left:39px;top:774.550px;width:1588px;height:1px;background:#d3d2d0"></div>
<div class="abs" style="left:98px;top:747.420px;width:1px;height:28.130px;background:#d3d2d0"></div>
<div class="abs" style="left:233px;top:747.420px;width:1px;height:28.130px;background:#d3d2d0"></div>
<div class="abs" style="left:548px;top:747.420px;width:1px;height:28.130px;background:#d3d2d0"></div>
<div class="abs" style="left:683px;top:747.420px;width:1px;height:28.130px;background:#d3d2d0"></div>
<div class="abs" style="left:818px;top:747.420px;width:1px;height:28.130px;background:#d3d2d0"></div>
<div class="abs" style="left:953px;top:747.420px;width:1px;height:28.130px;background:#d3d2d0"></div>
<div class="abs" style="left:1088px;top:747.420px;width:1px;height:28.130px;background:#d3d2d0"></div>
<div class="abs" style="left:1223px;top:747.420px;width:1px;height:28.130px;background:#d3d2d0"></div>
<div class="abs" style="left:1358px;top:747.420px;width:1px;height:28.130px;background:#d3d2d0"></div>
<div class="abs" style="left:1493px;top:747.420px;width:1px;height:28.130px;background:#d3d2d0"></div>
<div class="abs" style="left:22px;top:775.550px;width:76px;height:28.130px;background:#f2f2f2"></div>
<div class="abs" style="left:98px;top:775.550px;width:135px;height:28.130px;background:#ffffff"></div>
<div class="abs" style="left:233px;top:775.550px;width:315px;height:28.130px;background:#ffffff"></div>
<div class="abs" style="left:548px;top:775.550px;width:135px;height:28.130px;background:#f2f2f2"></div>
<div class="abs" style="left:683px;top:775.550px;width:135px;height:28.130px;background:#f2f2f2"></div>
<div class="abs" style="left:818px;top:775.550px;width:135px;height:28.130px;background:#f2f2f2"></div>
<div class="abs" style="left:953px;top:775.550px;width:135px;height:28.130px;background:#f2f2f2"></div>
<div class="abs" style="left:1088px;top:775.550px;width:135px;height:28.130px;background:#f2f2f2"></div>
<div class="abs" style="left:1223px;top:775.550px;width:135px;height:28.130px;background:#f2f2f2"></div>
<div class="abs" style="left:1358px;top:775.550px;width:135px;height:28.130px;background:#f2f2f2"></div>
<div class="abs" style="left:1493px;top:775.550px;width:135px;height:28.130px;background:#f2f2f2"></div>
<div class="abs" style="left:22px;top:775.550px;width:8px;height:28.130px;background:#07526c"></div>
<div class="abs" style="left:30px;top:775.550px;width:1px;height:28.130px;background:#e8e8e8"></div>
<div class="abs" style="left:31px;top:775.550px;width:8px;height:28.130px;background:#227d9e"></div>
<div class="t" style="left:42.50px;top:779.14px;font-size:16px;line-height:20px;color:#1f1e1c;">4.3</div>
<div class="t" style="left:109.20px;top:779.24px;font-size:15.7px;line-height:20px;color:#1f1e1c;">5S.04.03</div>
<div class="t" style="left:283.30px;top:779.14px;font-size:16px;line-height:20px;color:#1f1e1c;">Internal Doors</div>
<div class="t" style="right:954.50px;top:778.46px;font-size:16.5px;line-height:21px;color:#1f1e1c;">$1,575,000.00</div>
<div class="t" style="right:819.50px;top:778.46px;font-size:16.5px;line-height:21px;color:#1f1e1c;">$0.00</div>
<div class="t" style="right:684.50px;top:778.46px;font-size:16.5px;line-height:21px;color:#1f1e1c;">$0.00</div>
<div class="t" style="right:549.50px;top:778.46px;font-size:16.5px;line-height:21px;color:#1f1e1c;">$1,575,000.00</div>
<div class="t" style="right:414.50px;top:778.46px;font-size:16.5px;line-height:21px;color:#1f1e1c;">$0.00</div>
<div class="t" style="right:279.50px;top:778.46px;font-size:16.5px;line-height:21px;color:#1f1e1c;">$0.00</div>
<div class="t" style="right:144.50px;top:778.46px;font-size:16.5px;line-height:21px;color:#1f1e1c;">$1,575,000.00</div>
<div class="t" style="right:9.50px;top:778.46px;font-size:16.5px;line-height:21px;color:#1f1e1c;">$1,575,000.00</div>
<div class="abs" style="left:39px;top:802.680px;width:1588px;height:1px;background:#d3d2d0"></div>
<div class="abs" style="left:98px;top:775.550px;width:1px;height:28.130px;background:#d3d2d0"></div>
<div class="abs" style="left:233px;top:775.550px;width:1px;height:28.130px;background:#d3d2d0"></div>
<div class="abs" style="left:548px;top:775.550px;width:1px;height:28.130px;background:#d3d2d0"></div>
<div class="abs" style="left:683px;top:775.550px;width:1px;height:28.130px;background:#d3d2d0"></div>
<div class="abs" style="left:818px;top:775.550px;width:1px;height:28.130px;background:#d3d2d0"></div>
<div class="abs" style="left:953px;top:775.550px;width:1px;height:28.130px;background:#d3d2d0"></div>
<div class="abs" style="left:1088px;top:775.550px;width:1px;height:28.130px;background:#d3d2d0"></div>
<div class="abs" style="left:1223px;top:775.550px;width:1px;height:28.130px;background:#d3d2d0"></div>
<div class="abs" style="left:1358px;top:775.550px;width:1px;height:28.130px;background:#d3d2d0"></div>
<div class="abs" style="left:1493px;top:775.550px;width:1px;height:28.130px;background:#d3d2d0"></div>
<div class="abs" style="left:22px;top:803.680px;width:76px;height:28.130px;background:#f2f2f2"></div>
<div class="abs" style="left:98px;top:803.680px;width:135px;height:28.130px;background:#ffffff"></div>
<div class="abs" style="left:233px;top:803.680px;width:315px;height:28.130px;background:#ffffff"></div>
<div class="abs" style="left:548px;top:803.680px;width:135px;height:28.130px;background:#f2f2f2"></div>
<div class="abs" style="left:683px;top:803.680px;width:135px;height:28.130px;background:#f2f2f2"></div>
<div class="abs" style="left:818px;top:803.680px;width:135px;height:28.130px;background:#f2f2f2"></div>
<div class="abs" style="left:953px;top:803.680px;width:135px;height:28.130px;background:#f2f2f2"></div>
<div class="abs" style="left:1088px;top:803.680px;width:135px;height:28.130px;background:#f2f2f2"></div>
<div class="abs" style="left:1223px;top:803.680px;width:135px;height:28.130px;background:#f2f2f2"></div>
<div class="abs" style="left:1358px;top:803.680px;width:135px;height:28.130px;background:#f2f2f2"></div>
<div class="abs" style="left:1493px;top:803.680px;width:135px;height:28.130px;background:#f2f2f2"></div>
<div class="abs" style="left:22px;top:803.680px;width:8px;height:28.130px;background:#07526c"></div>
<div class="abs" style="left:30px;top:803.680px;width:1px;height:28.130px;background:#e8e8e8"></div>
<div class="abs" style="left:31px;top:803.680px;width:8px;height:28.130px;background:#227d9e"></div>
<div class="t" style="left:42.50px;top:807.27px;font-size:16px;line-height:20px;color:#1f1e1c;">4.4</div>
<div class="t" style="left:109.20px;top:807.37px;font-size:15.7px;line-height:20px;color:#1f1e1c;">5S.04.04</div>
<div class="t" style="left:283.30px;top:807.27px;font-size:16px;line-height:20px;color:#1f1e1c;">Wall Finishes</div>
<div class="t" style="right:954.50px;top:806.59px;font-size:16.5px;line-height:21px;color:#1f1e1c;">$1,365,000.00</div>
<div class="t" style="right:819.50px;top:806.59px;font-size:16.5px;line-height:21px;color:#1f1e1c;">$0.00</div>
<div class="t" style="right:684.50px;top:806.59px;font-size:16.5px;line-height:21px;color:#1f1e1c;">$0.00</div>
<div class="t" style="right:549.50px;top:806.59px;font-size:16.5px;line-height:21px;color:#1f1e1c;">$1,365,000.00</div>
<div class="t" style="right:414.50px;top:806.59px;font-size:16.5px;line-height:21px;color:#1f1e1c;">$0.00</div>
<div class="t" style="right:279.50px;top:806.59px;font-size:16.5px;line-height:21px;color:#1f1e1c;">$0.00</div>
<div class="t" style="right:144.50px;top:806.59px;font-size:16.5px;line-height:21px;color:#1f1e1c;">$1,365,000.00</div>
<div class="t" style="right:9.50px;top:806.59px;font-size:16.5px;line-height:21px;color:#1f1e1c;">$1,365,000.00</div>
<div class="abs" style="left:39px;top:830.810px;width:1588px;height:1px;background:#d3d2d0"></div>
<div class="abs" style="left:98px;top:803.680px;width:1px;height:28.130px;background:#d3d2d0"></div>
<div class="abs" style="left:233px;top:803.680px;width:1px;height:28.130px;background:#d3d2d0"></div>
<div class="abs" style="left:548px;top:803.680px;width:1px;height:28.130px;background:#d3d2d0"></div>
<div class="abs" style="left:683px;top:803.680px;width:1px;height:28.130px;background:#d3d2d0"></div>
<div class="abs" style="left:818px;top:803.680px;width:1px;height:28.130px;background:#d3d2d0"></div>
<div class="abs" style="left:953px;top:803.680px;width:1px;height:28.130px;background:#d3d2d0"></div>
<div class="abs" style="left:1088px;top:803.680px;width:1px;height:28.130px;background:#d3d2d0"></div>
<div class="abs" style="left:1223px;top:803.680px;width:1px;height:28.130px;background:#d3d2d0"></div>
<div class="abs" style="left:1358px;top:803.680px;width:1px;height:28.130px;background:#d3d2d0"></div>
<div class="abs" style="left:1493px;top:803.680px;width:1px;height:28.130px;background:#d3d2d0"></div>
<div class="abs" style="left:22px;top:831.810px;width:76px;height:28.130px;background:#f2f2f2"></div>
<div class="abs" style="left:98px;top:831.810px;width:135px;height:28.130px;background:#ffffff"></div>
<div class="abs" style="left:233px;top:831.810px;width:315px;height:28.130px;background:#ffffff"></div>
<div class="abs" style="left:548px;top:831.810px;width:135px;height:28.130px;background:#f2f2f2"></div>
<div class="abs" style="left:683px;top:831.810px;width:135px;height:28.130px;background:#f2f2f2"></div>
<div class="abs" style="left:818px;top:831.810px;width:135px;height:28.130px;background:#f2f2f2"></div>
<div class="abs" style="left:953px;top:831.810px;width:135px;height:28.130px;background:#f2f2f2"></div>
<div class="abs" style="left:1088px;top:831.810px;width:135px;height:28.130px;background:#f2f2f2"></div>
<div class="abs" style="left:1223px;top:831.810px;width:135px;height:28.130px;background:#f2f2f2"></div>
<div class="abs" style="left:1358px;top:831.810px;width:135px;height:28.130px;background:#f2f2f2"></div>
<div class="abs" style="left:1493px;top:831.810px;width:135px;height:28.130px;background:#f2f2f2"></div>
<div class="abs" style="left:22px;top:831.810px;width:8px;height:28.130px;background:#07526c"></div>
<div class="abs" style="left:30px;top:831.810px;width:1px;height:28.130px;background:#e8e8e8"></div>
<div class="abs" style="left:31px;top:831.810px;width:8px;height:28.130px;background:#227d9e"></div>
<div class="t" style="left:42.50px;top:835.40px;font-size:16px;line-height:20px;color:#1f1e1c;">4.5</div>
<div class="t" style="left:109.20px;top:835.50px;font-size:15.7px;line-height:20px;color:#1f1e1c;">5S.04.05</div>
<div class="t" style="left:283.30px;top:835.40px;font-size:16px;line-height:20px;color:#1f1e1c;">Floor Finishes</div>
<div class="t" style="right:954.50px;top:834.72px;font-size:16.5px;line-height:21px;color:#1f1e1c;">$735,000.00</div>
<div class="t" style="right:819.50px;top:834.72px;font-size:16.5px;line-height:21px;color:#1f1e1c;">$0.00</div>
<div class="t" style="right:684.50px;top:834.72px;font-size:16.5px;line-height:21px;color:#1f1e1c;">$0.00</div>
<div class="t" style="right:549.50px;top:834.72px;font-size:16.5px;line-height:21px;color:#1f1e1c;">$735,000.00</div>
<div class="t" style="right:414.50px;top:834.72px;font-size:16.5px;line-height:21px;color:#1f1e1c;">$0.00</div>
<div class="t" style="right:279.50px;top:834.72px;font-size:16.5px;line-height:21px;color:#1f1e1c;">$0.00</div>
<div class="t" style="right:144.50px;top:834.72px;font-size:16.5px;line-height:21px;color:#1f1e1c;">$735,000.00</div>
<div class="t" style="right:9.50px;top:834.72px;font-size:16.5px;line-height:21px;color:#1f1e1c;">$735,000.00</div>
<div class="abs" style="left:39px;top:858.940px;width:1588px;height:1px;background:#d3d2d0"></div>
<div class="abs" style="left:98px;top:831.810px;width:1px;height:28.130px;background:#d3d2d0"></div>
<div class="abs" style="left:233px;top:831.810px;width:1px;height:28.130px;background:#d3d2d0"></div>
<div class="abs" style="left:548px;top:831.810px;width:1px;height:28.130px;background:#d3d2d0"></div>
<div class="abs" style="left:683px;top:831.810px;width:1px;height:28.130px;background:#d3d2d0"></div>
<div class="abs" style="left:818px;top:831.810px;width:1px;height:28.130px;background:#d3d2d0"></div>
<div class="abs" style="left:953px;top:831.810px;width:1px;height:28.130px;background:#d3d2d0"></div>
<div class="abs" style="left:1088px;top:831.810px;width:1px;height:28.130px;background:#d3d2d0"></div>
<div class="abs" style="left:1223px;top:831.810px;width:1px;height:28.130px;background:#d3d2d0"></div>
<div class="abs" style="left:1358px;top:831.810px;width:1px;height:28.130px;background:#d3d2d0"></div>
<div class="abs" style="left:1493px;top:831.810px;width:1px;height:28.130px;background:#d3d2d0"></div>
<div class="abs" style="left:22px;top:859.940px;width:76px;height:28.130px;background:#f2f2f2"></div>
<div class="abs" style="left:98px;top:859.940px;width:135px;height:28.130px;background:#ffffff"></div>
<div class="abs" style="left:233px;top:859.940px;width:315px;height:28.130px;background:#ffffff"></div>
<div class="abs" style="left:548px;top:859.940px;width:135px;height:28.130px;background:#f2f2f2"></div>
<div class="abs" style="left:683px;top:859.940px;width:135px;height:28.130px;background:#f2f2f2"></div>
<div class="abs" style="left:818px;top:859.940px;width:135px;height:28.130px;background:#f2f2f2"></div>
<div class="abs" style="left:953px;top:859.940px;width:135px;height:28.130px;background:#f2f2f2"></div>
<div class="abs" style="left:1088px;top:859.940px;width:135px;height:28.130px;background:#f2f2f2"></div>
<div class="abs" style="left:1223px;top:859.940px;width:135px;height:28.130px;background:#f2f2f2"></div>
<div class="abs" style="left:1358px;top:859.940px;width:135px;height:28.130px;background:#f2f2f2"></div>
<div class="abs" style="left:1493px;top:859.940px;width:135px;height:28.130px;background:#f2f2f2"></div>
<div class="abs" style="left:22px;top:859.940px;width:8px;height:28.130px;background:#07526c"></div>
<div class="abs" style="left:30px;top:859.940px;width:1px;height:28.130px;background:#e8e8e8"></div>
<div class="abs" style="left:31px;top:859.940px;width:8px;height:28.130px;background:#227d9e"></div>
<div class="t" style="left:42.50px;top:863.53px;font-size:16px;line-height:20px;color:#1f1e1c;">4.6</div>
<div class="t" style="left:109.20px;top:863.63px;font-size:15.7px;line-height:20px;color:#1f1e1c;">5S.04.06</div>
<div class="t" style="left:283.30px;top:863.53px;font-size:16px;line-height:20px;color:#1f1e1c;">Ceiling Finishes</div>
<div class="t" style="right:954.50px;top:862.85px;font-size:16.5px;line-height:21px;color:#1f1e1c;">$1,260,000.00</div>
<div class="t" style="right:819.50px;top:862.85px;font-size:16.5px;line-height:21px;color:#1f1e1c;">$0.00</div>
<div class="t" style="right:684.50px;top:862.85px;font-size:16.5px;line-height:21px;color:#1f1e1c;">$0.00</div>
<div class="t" style="right:549.50px;top:862.85px;font-size:16.5px;line-height:21px;color:#1f1e1c;">$1,260,000.00</div>
<div class="t" style="right:414.50px;top:862.85px;font-size:16.5px;line-height:21px;color:#1f1e1c;">$0.00</div>
<div class="t" style="right:279.50px;top:862.85px;font-size:16.5px;line-height:21px;color:#1f1e1c;">$0.00</div>
<div class="t" style="right:144.50px;top:862.85px;font-size:16.5px;line-height:21px;color:#1f1e1c;">$1,260,000.00</div>
<div class="t" style="right:9.50px;top:862.85px;font-size:16.5px;line-height:21px;color:#1f1e1c;">$1,260,000.00</div>
<div class="abs" style="left:39px;top:887.070px;width:1588px;height:1px;background:#d3d2d0"></div>
<div class="abs" style="left:98px;top:859.940px;width:1px;height:28.130px;background:#d3d2d0"></div>
<div class="abs" style="left:233px;top:859.940px;width:1px;height:28.130px;background:#d3d2d0"></div>
<div class="abs" style="left:548px;top:859.940px;width:1px;height:28.130px;background:#d3d2d0"></div>
<div class="abs" style="left:683px;top:859.940px;width:1px;height:28.130px;background:#d3d2d0"></div>
<div class="abs" style="left:818px;top:859.940px;width:1px;height:28.130px;background:#d3d2d0"></div>
<div class="abs" style="left:953px;top:859.940px;width:1px;height:28.130px;background:#d3d2d0"></div>
<div class="abs" style="left:1088px;top:859.940px;width:1px;height:28.130px;background:#d3d2d0"></div>
<div class="abs" style="left:1223px;top:859.940px;width:1px;height:28.130px;background:#d3d2d0"></div>
<div class="abs" style="left:1358px;top:859.940px;width:1px;height:28.130px;background:#d3d2d0"></div>
<div class="abs" style="left:1493px;top:859.940px;width:1px;height:28.130px;background:#d3d2d0"></div>
<div class="abs" style="left:1607px;top:43px;width:20px;height:845px;background:#fafafa"></div>
<div class="abs" style="left:1626px;top:43px;width:1px;height:845px;background:#d3d2d0"></div>
<svg style="left:0;top:0" width="1627" height="888"><path d="M1610.4 58.400000000000006 H1623 L1616.7 49.19999999999999Z" fill="#8a8a8a" stroke="#8a8a8a" stroke-width="1" stroke-linejoin="round"/></svg>
<div class="abs" style="left:1611.2px;top:65.80000000000001px;width:11px;height:391.6px;background:#8e8e8e;border-radius:5.5px"></div>
</div>
</body></html>
